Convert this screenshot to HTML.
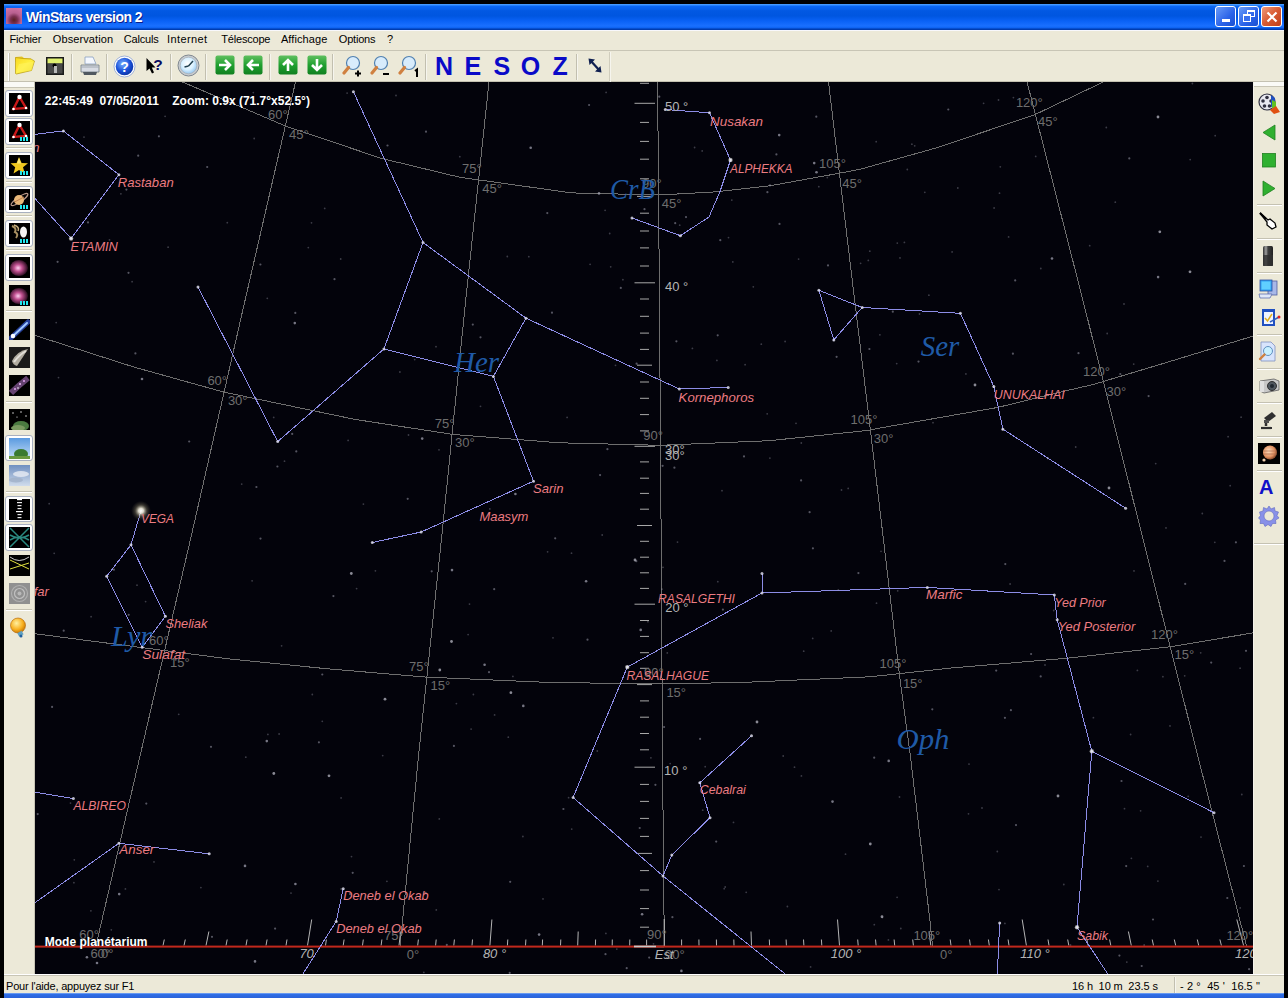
<!DOCTYPE html>
<html><head><meta charset="utf-8">
<style>
*{margin:0;padding:0;box-sizing:border-box}
html,body{width:1288px;height:998px;overflow:hidden;background:#000;font-family:"Liberation Sans",sans-serif;position:relative}
.abs{position:absolute}
#title{left:4px;top:4px;width:1280px;height:26px;background:linear-gradient(#4a9cff 0,#3d95ff 1px,#0c68f4 2px,#0258e2 7px,#0056e0 12px,#0a62f6 17px,#1a70ff 22px,#0c62f0 24px,#003cb0 25px,#003cb0 26px)}
#title .t{left:22px;top:5px;color:#fff;font-weight:bold;font-size:14px;line-height:16px;letter-spacing:-0.55px;text-shadow:1px 1px 0 #0a1e8c;white-space:nowrap}
#menu{left:4px;top:30px;width:1280px;height:21px;background:#ece9d8;border-top:1px solid #f8f8fc}
#menu span{position:absolute;top:2px;font-size:11px;line-height:13px;letter-spacing:-0.2px;color:#000;white-space:nowrap}
#tb{left:4px;top:50px;width:1280px;height:32px;background:#ece9d8;border-top:1px solid #c8c5b5;border-bottom:1px solid #c4c1b1}
#sky{left:35px;top:82px;width:1218px;height:892px;background:#03030b;overflow:hidden}
#ltb{left:4px;top:82px;width:31px;height:892px;background:#ece9d8;border-right:1px solid #c8c5b5}
#rtb{left:1253px;top:82px;width:31px;height:892px;background:#ece9d8;border-left:1px solid #f4f2ea}
#status{left:4px;top:974px;width:1280px;height:19px;background:#ece9d8;border-top:1px solid #fff}
#status span{position:absolute;top:5px;font-size:11px;line-height:13px;color:#000;white-space:nowrap;letter-spacing:-0.2px}
#bot{left:4px;top:993px;width:1280px;height:5px;background:linear-gradient(#9cc0f8 0,#2f6fe8 1px,#2a62d8 5px)}
.btn{top:2px;width:21px;height:21px;border:1px solid #fff;border-radius:3px;background:linear-gradient(135deg,#6a9cf8,#2a62e8 60%,#1a50d0)}
.sep{position:absolute;width:2px;border-left:1px solid #c2bfaf;border-right:1px solid #f6f5ee}
.hsep{position:absolute;height:2px;border-top:1px solid #c5c2b2;border-bottom:1px solid #fff}
.nesoz{position:absolute;top:1px;font-size:25px;line-height:28px;font-weight:bold;color:#0a0ac8}
.fr{position:absolute;left:1px;width:28px;border:1px solid #a8b0c0;border-radius:3px;background:#fff}
.ic{position:absolute}
</style></head>
<body>
<div id="title" class="abs">
  <div class="abs" style="left:2px;top:4px;width:16px;height:16px;background:radial-gradient(circle at 50% 75%,#5a2020 0,#7a3050 25%,#b86090 50%,#d878a8 100%)"></div>
  <div class="abs t">WinStars version 2</div>
  <div class="abs btn" style="left:1211px"><div class="abs" style="left:6px;top:12px;width:8px;height:3px;background:#fff"></div></div>
  <div class="abs btn" style="left:1234px"><div class="abs" style="left:8px;top:3px;width:8px;height:7px;border:1px solid #fff;border-top-width:2px"></div><div class="abs" style="left:4px;top:7px;width:8px;height:8px;border:1px solid #fff;border-top-width:2px;background:#3a70ee"></div></div>
  <div class="abs btn" style="left:1257px;background:linear-gradient(135deg,#f09a7a,#d85a32 50%,#c0401a)"><svg class="abs" style="left:4px;top:4px" width="12" height="12"><path d="M1.5 1.5L10.5 10.5M10.5 1.5L1.5 10.5" stroke="#fff" stroke-width="2.2"/></svg></div>
</div>
<div id="menu" class="abs">
  <span style="left:5.6px">Fichier</span>
  <span style="left:48.8px;letter-spacing:0.1px">Observation</span>
  <span style="left:119.8px">Calculs</span>
  <span style="left:163px;letter-spacing:0.4px">Internet</span>
  <span style="left:217.3px">Télescope</span>
  <span style="left:276.9px;letter-spacing:0.1px">Affichage</span>
  <span style="left:334.8px">Options</span>
  <span style="left:383px">?</span>
</div>
<div id="tb" class="abs"><div class="sep" style="left:4px;top:2px;height:28px;border-left-color:#fff;border-right-color:#c5c2b2"></div>
<svg class="ic" style="left:11px;top:5px" width="21" height="19" viewBox="0 0 21 19">
 <defs><linearGradient id="fold" x1="0" y1="0" x2="1" y2="1"><stop offset="0" stop-color="#f8d820"/><stop offset="0.5" stop-color="#fff040"/><stop offset="1" stop-color="#e8d010"/></linearGradient></defs>
 <path d="M0.5 1 L7 0.5 L9 2 L16 2.5 L16 6 L0.5 6 Z" fill="#e8c828"/>
 <path d="M0.5 1.5 L0.5 17.5 L1.5 18 L16.5 14.5 L19.5 5 L16 3 L8 2.5 Z" fill="url(#fold)" stroke="#b89810" stroke-width="0.7"/>
 <path d="M1 17 L4 8 L19 5.5 L16.5 14.5 Z" fill="#fff460" opacity="0.6"/>
</svg>
<svg class="ic" style="left:42px;top:6px" width="18" height="18" viewBox="0 0 18 18">
 <rect x="0" y="0" width="18" height="18" fill="#1a1a1a"/>
 <rect x="1.5" y="1.5" width="15" height="5" fill="#e0f070"/>
 <rect x="1.5" y="6.5" width="15" height="10" fill="#484848"/>
 <circle cx="8.5" cy="8.5" r="2" fill="#000"/>
 <rect x="8" y="9" width="3" height="7" fill="#b8b8b8"/>
</svg>
<div class="sep" style="left:67px;top:3px;height:26px"></div>
<svg class="ic" style="left:75px;top:4px" width="22" height="22" viewBox="0 0 22 22">
 <path d="M6 2 L14 2 L17 9 L6 9 Z" fill="#f4f8ff" stroke="#8aa0c0" stroke-width="0.8"/>
 <path d="M2 10 L20 10 L20 17 L2 17 Z" fill="#d8dce4" stroke="#707880" stroke-width="0.8"/>
 <path d="M2 12 L20 12" stroke="#a0a8b0" stroke-width="1"/>
 <path d="M4 17 L18 17 L17 20 L5 20 Z" fill="#505860"/>
</svg>
<div class="sep" style="left:102px;top:3px;height:26px"></div>
<svg class="ic" style="left:109px;top:4px" width="23" height="23" viewBox="0 0 23 23">
 <defs><radialGradient id="hq" cx="0.4" cy="0.35" r="0.7"><stop offset="0" stop-color="#7ab0ff"/><stop offset="0.6" stop-color="#1a50d8"/><stop offset="1" stop-color="#0a30a0"/></radialGradient></defs>
 <circle cx="11.5" cy="11.5" r="10.5" fill="#fff" stroke="#8aa0d0" stroke-width="0.8"/>
 <circle cx="11.5" cy="11.5" r="8.8" fill="url(#hq)"/>
 <text x="11.5" y="17" font-size="14" font-weight="bold" fill="#fff" text-anchor="middle" font-family="Liberation Sans">?</text>
</svg>
<svg class="ic" style="left:142px;top:6px" width="20" height="18" viewBox="0 0 20 18">
 <path d="M0.5 1 L0.5 14 L3.5 11.5 L6 16.5 L8 15.5 L5.8 10.5 L9.5 10.5 Z" fill="#000"/>
 <text x="12" y="13" font-size="15.5" font-weight="bold" fill="#0a0a60" text-anchor="middle" font-family="Liberation Sans">?</text>
</svg>
<div class="sep" style="left:166px;top:3px;height:26px"></div>
<svg class="ic" style="left:173px;top:3px" width="23" height="23" viewBox="0 0 23 23">
 <defs><radialGradient id="clk" cx="0.45" cy="0.4" r="0.6"><stop offset="0" stop-color="#ffffff"/><stop offset="0.6" stop-color="#d8f0ff"/><stop offset="1" stop-color="#98c8f0"/></radialGradient></defs>
 <circle cx="11.5" cy="11.5" r="10.5" fill="#c8ccd0" stroke="#808890" stroke-width="1"/>
 <circle cx="11.5" cy="11.5" r="8.3" fill="url(#clk)" stroke="#a0a8b0" stroke-width="0.6"/>
 <path d="M11.5 12 L16 7 M11.5 12 L7.5 13" stroke="#204050" stroke-width="1.5"/>
</svg>
<div class="sep" style="left:201px;top:3px;height:26px"></div>
<svg class="ic" style="left:211px;top:4px" width="20" height="20" viewBox="0 0 20 20">
 <defs><linearGradient id="grn" x1="0" y1="0" x2="0" y2="1"><stop offset="0" stop-color="#60c060"/><stop offset="0.5" stop-color="#20a030"/><stop offset="1" stop-color="#108020"/></linearGradient></defs>
 <rect x="0.5" y="0.5" width="19" height="19" rx="2" fill="url(#grn)"/>
 <path d="M4 10 L15 10 M10 5 L15 10 L10 15" stroke="#fff" stroke-width="2.6" fill="none"/>
</svg>
<svg class="ic" style="left:239px;top:4px" width="20" height="20" viewBox="0 0 20 20">
 <rect x="0.5" y="0.5" width="19" height="19" rx="2" fill="url(#grn)"/>
 <path d="M16 10 L5 10 M10 5 L5 10 L10 15" stroke="#fff" stroke-width="2.6" fill="none"/>
</svg>
<div class="sep" style="left:265px;top:3px;height:26px"></div>
<svg class="ic" style="left:274px;top:4px" width="20" height="20" viewBox="0 0 20 20">
 <rect x="0.5" y="0.5" width="19" height="19" rx="2" fill="url(#grn)"/>
 <path d="M10 16 L10 5 M5 10 L10 5 L15 10" stroke="#fff" stroke-width="2.6" fill="none"/>
</svg>
<svg class="ic" style="left:303px;top:4px" width="20" height="20" viewBox="0 0 20 20">
 <rect x="0.5" y="0.5" width="19" height="19" rx="2" fill="url(#grn)"/>
 <path d="M10 4 L10 15 M5 10 L10 15 L15 10" stroke="#fff" stroke-width="2.6" fill="none"/>
</svg>
<div class="sep" style="left:328px;top:3px;height:26px"></div>
<svg class="ic" style="left:338px;top:4px" width="20" height="22" viewBox="0 0 20 22">
 <circle cx="11" cy="8" r="6.5" fill="#d8ecfc" stroke="#5080b0" stroke-width="1.2"/>
 <path d="M6.5 12.5 L2 18" stroke="#d08040" stroke-width="3.2" stroke-linecap="round"/>
 <path d="M13 18.5 L19 18.5 M16 15.5 L16 21.5" stroke="#000" stroke-width="2"/>
</svg>
<svg class="ic" style="left:366px;top:4px" width="20" height="22" viewBox="0 0 20 22">
 <circle cx="11" cy="8" r="6.5" fill="#d8ecfc" stroke="#5080b0" stroke-width="1.2"/>
 <path d="M6.5 12.5 L2 18" stroke="#d08040" stroke-width="3.2" stroke-linecap="round"/>
 <path d="M13 19 L19 19" stroke="#000" stroke-width="2"/>
</svg>
<svg class="ic" style="left:394px;top:4px" width="22" height="22" viewBox="0 0 22 22">
 <circle cx="11" cy="8" r="6.5" fill="#d8ecfc" stroke="#5080b0" stroke-width="1.2"/>
 <path d="M6.5 12.5 L2 18" stroke="#d08040" stroke-width="3.2" stroke-linecap="round"/>
 <path d="M17 16 L19 14.5 L19 22" stroke="#000" stroke-width="2" fill="none"/>
</svg>
<div class="sep" style="left:421px;top:3px;height:26px"></div>
<div class="nesoz" style="left:431px">N</div>
<div class="nesoz" style="left:460.5px">E</div>
<div class="nesoz" style="left:489.5px">S</div>
<div class="nesoz" style="left:516.8px">O</div>
<div class="nesoz" style="left:548.5px">Z</div>
<div class="sep" style="left:572px;top:3px;height:26px"></div>
<svg class="ic" style="left:583px;top:6px" width="16" height="18" viewBox="0 0 16 18">
 <path d="M3 3 L13 14" stroke="#102050" stroke-width="2.2"/>
 <path d="M1.5 1.5 L8 2.5 L2.5 8 Z M14.5 15.5 L8 14.5 L13.5 9 Z" fill="#102050"/>
</svg>
<div class="sep" style="left:605px;top:1px;height:30px;border-left-color:#d0cdbd"></div>
</div>
<div id="ltb" class="abs"><div class="abs" style="left:0;top:0;width:30px;height:6px;background:#fafaf6;border-bottom:1px solid #c8c5b5"></div>
<div class="fr" style="top:8px;height:27px"></div>
<svg class="ic" style="left:5px;top:11px" width="21" height="21" viewBox="0 0 21 21"><rect width="21" height="21" fill="#000"/><path d="M10.5 4 L17 15 L4.5 16 Z" fill="none" stroke="#c81818" stroke-width="2.4"/><circle cx="10.5" cy="4" r="2.2" fill="#fff"/><circle cx="17" cy="15" r="1.3" fill="#fff"/><circle cx="4.5" cy="16" r="1.3" fill="#fff"/></svg>
<div class="fr" style="top:36px;height:27px"></div>
<svg class="ic" style="left:5px;top:39px" width="21" height="21" viewBox="0 0 21 21"><rect width="21" height="21" fill="#000"/><path d="M10.5 4 L17 15 L4.5 16 Z" fill="none" stroke="#c81818" stroke-width="2.4"/><circle cx="10.5" cy="4" r="2.2" fill="#fff"/><circle cx="17" cy="15" r="1.3" fill="#fff"/><circle cx="4.5" cy="16" r="1.3" fill="#fff"/><rect x="11" y="16" width="2" height="4" fill="#20e8f0"/><rect x="14" y="16" width="2" height="4" fill="#20e8f0"/><rect x="17" y="16" width="2" height="4" fill="#20e8f0"/></svg>
<div class="hsep" style="left:2px;width:26px;top:65px"></div>
<div class="fr" style="top:70px;height:27px"></div>
<svg class="ic" style="left:5px;top:73px" width="21" height="21" viewBox="0 0 21 21"><rect width="21" height="21" fill="#000"/><path d="M10 2 L12.6 8 L19 8.3 L14 12.3 L15.8 18.5 L10 15 L4.5 18.5 L6.2 12.3 L1.5 8.3 L7.6 8 Z" fill="#f0c820"/><path d="M10 3 L12 8.5 L8 8.5 Z" fill="#f8e880"/><rect x="11" y="16" width="2" height="4" fill="#20e8f0"/><rect x="14" y="16" width="2" height="4" fill="#20e8f0"/><rect x="17" y="16" width="2" height="4" fill="#20e8f0"/></svg>
<div class="hsep" style="left:2px;width:26px;top:99px"></div>
<div class="fr" style="top:104px;height:27px"></div>
<svg class="ic" style="left:5px;top:107px" width="21" height="21" viewBox="0 0 21 21"><rect width="21" height="21" fill="#000"/><ellipse cx="10.5" cy="10.5" rx="10" ry="2.6" transform="rotate(-35 10.5 10.5)" fill="none" stroke="#b89888" stroke-width="1.2"/><circle cx="10" cy="11" r="5" fill="#e8b878"/><path d="M5.5 13 L15 8" stroke="#c08050" stroke-width="1"/><rect x="11" y="16" width="2" height="4" fill="#20e8f0"/><rect x="14" y="16" width="2" height="4" fill="#20e8f0"/><rect x="17" y="16" width="2" height="4" fill="#20e8f0"/></svg>
<div class="hsep" style="left:2px;width:26px;top:133px"></div>
<div class="fr" style="top:138px;height:27px"></div>
<svg class="ic" style="left:5px;top:141px" width="21" height="21" viewBox="0 0 21 21"><rect width="21" height="21" fill="#000"/><path d="M3 3 Q8 5 6 9 Q10 11 7 15" stroke="#a89060" stroke-width="2" fill="none"/><path d="M5 2 Q11 4 9 8" stroke="#c8b080" stroke-width="1.5" fill="none"/><ellipse cx="14.5" cy="9" rx="3.5" ry="5.5" fill="#f4f4f4"/><rect x="11" y="16" width="2" height="4" fill="#20e8f0"/><rect x="14" y="16" width="2" height="4" fill="#20e8f0"/><rect x="17" y="16" width="2" height="4" fill="#20e8f0"/></svg>
<div class="hsep" style="left:2px;width:26px;top:167px"></div>
<div class="fr" style="top:172px;height:27px"></div>
<svg class="ic" style="left:5px;top:175px" width="21" height="21" viewBox="0 0 21 21"><rect width="21" height="21" fill="#000"/><defs><radialGradient id="neb" cx="0.45" cy="0.5" r="0.55"><stop offset="0" stop-color="#ffd0f0"/><stop offset="0.4" stop-color="#c05090"/><stop offset="1" stop-color="#200818"/></radialGradient></defs><ellipse cx="10" cy="11" rx="9" ry="8" fill="url(#neb)"/></svg>
<svg class="ic" style="left:5px;top:203px" width="21" height="21" viewBox="0 0 21 21"><rect width="21" height="21" fill="#000"/><ellipse cx="10" cy="11" rx="9" ry="8" fill="url(#neb)"/><rect x="11" y="16" width="2" height="4" fill="#20e8f0"/><rect x="14" y="16" width="2" height="4" fill="#20e8f0"/><rect x="17" y="16" width="2" height="4" fill="#20e8f0"/></svg>
<div class="hsep" style="left:2px;width:26px;top:228px"></div>
<svg class="ic" style="left:5px;top:237px" width="21" height="21" viewBox="0 0 21 21"><rect width="21" height="21" fill="#000"/><path d="M2 19 L19 3" stroke="#3050c0" stroke-width="5" stroke-linecap="round" opacity="0.8"/><path d="M3 18 L18 4" stroke="#a0c8ff" stroke-width="2" stroke-linecap="round"/><circle cx="4" cy="17" r="2.2" fill="#fff"/></svg>
<svg class="ic" style="left:5px;top:264.6px" width="21" height="21" viewBox="0 0 21 21"><rect width="21" height="21" fill="#1a1a1a"/><path d="M3 14 Q8 4 19 2 Q14 10 8 19 Q4 18 3 14 Z" fill="#b0aca0"/><path d="M5 15 Q10 8 17 4" stroke="#e0ded8" stroke-width="2" fill="none"/></svg>
<svg class="ic" style="left:5px;top:292.5px" width="21" height="21" viewBox="0 0 21 21"><rect width="21" height="21" fill="#000"/><path d="M2 18 Q10 10 19 3" stroke="#9060a0" stroke-width="6" opacity="0.7"/><circle cx="6" cy="14" r="1" fill="#e0a0f0"/><circle cx="11" cy="9" r="1" fill="#f0c0ff"/><circle cx="15" cy="6" r="1" fill="#e0a0f0"/><circle cx="9" cy="13" r="0.8" fill="#fff"/></svg>
<div class="hsep" style="left:2px;width:26px;top:319px"></div>
<svg class="ic" style="left:5px;top:327px" width="21" height="21" viewBox="0 0 21 21"><rect width="21" height="21" fill="#000"/><circle cx="4" cy="4" r="0.7" fill="#fff"/><circle cx="12" cy="3" r="0.7" fill="#fff"/><circle cx="17" cy="7" r="0.7" fill="#fff"/><circle cx="8" cy="8" r="0.6" fill="#fff"/><ellipse cx="12" cy="17" rx="8" ry="5" fill="#4a7a40"/><ellipse cx="9" cy="19" rx="7" ry="3" fill="#7a9a60"/></svg>
<div class="fr" style="top:353px;height:26px"></div>
<svg class="ic" style="left:5px;top:355.5px" width="21" height="21" viewBox="0 0 21 21"><defs><linearGradient id="dsky" x1="0" y1="0" x2="0" y2="1"><stop offset="0" stop-color="#5a9ae0"/><stop offset="1" stop-color="#c8e0f8"/></linearGradient></defs><rect width="21" height="21" fill="url(#dsky)"/><ellipse cx="12" cy="16" rx="7" ry="5" fill="#3a7a30"/><rect x="0" y="18" width="21" height="3" fill="#6a9a40"/></svg>
<svg class="ic" style="left:5px;top:383px" width="21" height="21" viewBox="0 0 21 21"><defs><linearGradient id="cl" x1="0" y1="0" x2="0" y2="1"><stop offset="0" stop-color="#7090c0"/><stop offset="1" stop-color="#d0dcec"/></linearGradient></defs><rect width="21" height="21" fill="url(#cl)"/><ellipse cx="12" cy="9" rx="8" ry="3" fill="#e8ecf4" opacity="0.8"/><ellipse cx="7" cy="15" rx="7" ry="2.5" fill="#a0b0c8" opacity="0.8"/></svg>
<div class="hsep" style="left:2px;width:26px;top:409px"></div>
<div class="fr" style="top:414px;height:26px"></div>
<svg class="ic" style="left:5px;top:417px" width="21" height="21" viewBox="0 0 21 21"><rect width="21" height="21" fill="#000"/><rect x="8" y="0" width="5" height="1.2" fill="#fff"/><rect x="8" y="3" width="5" height="1.2" fill="#e8e8e8"/><rect x="8.5" y="6" width="4" height="1.2" fill="#e8e8e8"/><rect x="8.5" y="9" width="4" height="1.2" fill="#e8e8e8"/><rect x="7" y="12" width="7" height="1.2" fill="#fff"/><rect x="8.5" y="15" width="4" height="1.2" fill="#e8e8e8"/><rect x="8.5" y="18" width="4" height="1.2" fill="#e8e8e8"/></svg>
<div class="fr" style="top:442px;height:27px"></div>
<svg class="ic" style="left:5px;top:445px" width="21" height="21" viewBox="0 0 21 21"><rect width="21" height="21" fill="#000"/><path d="M1 1 L20 20 M20 1 L1 20 M1 8 Q10.5 14 20 8 M1 13 Q10.5 7 20 13" stroke="#2a8a80" stroke-width="1.5" fill="none"/></svg>
<svg class="ic" style="left:5px;top:473px" width="21" height="21" viewBox="0 0 21 21"><rect width="21" height="21" fill="#000"/><path d="M1 5 L20 14 M1 14 L20 8" stroke="#e0e040" stroke-width="1" fill="none"/><path d="M1 2 Q10 9 20 2" stroke="#fff" stroke-width="0.8" fill="none"/></svg>
<svg class="ic" style="left:5px;top:500.5px" width="21" height="21" viewBox="0 0 21 21"><rect width="21" height="21" fill="#909090"/><circle cx="10.5" cy="10.5" r="8" fill="none" stroke="#b0b0b0" stroke-width="1.2"/><circle cx="10.5" cy="10.5" r="5" fill="none" stroke="#c0c0c0" stroke-width="1.2"/><circle cx="10.5" cy="10.5" r="2" fill="#b8b8b8"/></svg>
<div class="hsep" style="left:2px;width:26px;top:527px"></div>
<svg class="ic" style="left:5px;top:535px" width="21" height="21" viewBox="0 0 21 21"><defs><radialGradient id="bulb" cx="0.4" cy="0.35" r="0.7"><stop offset="0" stop-color="#fff0a0"/><stop offset="0.6" stop-color="#f8b020"/><stop offset="1" stop-color="#c07000"/></radialGradient></defs><circle cx="9" cy="8.5" r="7.5" fill="url(#bulb)" stroke="#b06000" stroke-width="0.6"/><rect x="9" y="15" width="5" height="4" fill="#60a0c0" transform="rotate(-30 11 17)"/><circle cx="12" cy="19" r="1.5" fill="#2060a0"/></svg></div>
<div id="sky" class="abs"></div>
<svg class="abs" style="left:35px;top:82px" width="1218" height="892" viewBox="35 82 1218 892" font-family="Liberation Sans" xml:space="preserve"><defs><radialGradient id="vg"><stop offset="0" stop-color="#ffffff" stop-opacity="1"/><stop offset="0.25" stop-color="#f4f0e0" stop-opacity="0.9"/><stop offset="0.6" stop-color="#a09878" stop-opacity="0.35"/><stop offset="1" stop-color="#605840" stop-opacity="0"/></radialGradient></defs><polyline points="170,77 184.8,83 285.4,126 381,158.3 460,177.3 571.8,192.9 658.8,195 714.7,191.9 770.6,185.7 838.9,173.3 860,169.3 937,147.7 1034.8,114.7 1102.2,82.5 1114,76" fill="none" stroke="#6e6e6e" stroke-width="1" shape-rendering="crispEdges"/>
<polyline points="30,333.8 35,335.4 134.4,367.2 223.8,392.1 283.4,404.5 355,419.4 452.7,434.4 559.6,442.8 660.3,445.3 769.3,440.7 870,430.2 880,428 997.4,407.5 1066.3,390.7 1093,384.6 1167.5,362.2 1253,336.1 1260,334" fill="none" stroke="#6e6e6e" stroke-width="1" shape-rendering="crispEdges"/>
<polyline points="30,633 35,633.7 142.6,647.7 230.6,659.1 328.4,668.9 426.3,677.1 547.8,682.4 658.7,684 743.4,682.4 870,676.8 951.5,668 1067.5,658.2 1171.3,646.6 1253,632.9 1260,631.5" fill="none" stroke="#6e6e6e" stroke-width="1" shape-rendering="crispEdges"/>
<polyline points="297,76 295.3,83 270.5,190 243.5,307 192.2,532 139.8,757 98.4,935.3 96,946" fill="none" stroke="#6e6e6e" stroke-width="1" shape-rendering="crispEdges"/>
<polyline points="489.5,76 489,82 465,307 442.2,532 418.4,757 400.2,944.7 400,946" fill="none" stroke="#6e6e6e" stroke-width="1" shape-rendering="crispEdges"/>
<polyline points="657.5,76 657.6,82 659.5,307 661.1,532 662.5,757 664.3,946" fill="none" stroke="#6e6e6e" stroke-width="1" shape-rendering="crispEdges"/>
<polyline points="827.5,76 828.5,82 839.5,174.1 854.8,301.3 870.2,428.5 881.1,519.7 899.5,675.3 910.5,756.9 930.4,924.5 932.6,946.5" fill="none" stroke="#6e6e6e" stroke-width="1" shape-rendering="crispEdges"/>
<polyline points="1025.5,76 1027.2,82.5 1052.2,180 1084.6,307 1141.2,532 1198,757 1246,944 1246.5,946" fill="none" stroke="#6e6e6e" stroke-width="1" shape-rendering="crispEdges"/>
<line x1="640" y1="83.3" x2="649" y2="83.3" stroke="#a8a8a8" stroke-width="1"/>
<line x1="634.5" y1="103.3" x2="655" y2="103.3" stroke="#a8a8a8" stroke-width="1"/>
<line x1="634.5" y1="282.8" x2="655" y2="282.8" stroke="#a8a8a8" stroke-width="1"/>
<line x1="634.5" y1="446.3" x2="655" y2="446.3" stroke="#a8a8a8" stroke-width="1"/>
<line x1="634.5" y1="604.2" x2="655" y2="604.2" stroke="#a8a8a8" stroke-width="1"/>
<line x1="634.5" y1="767.2" x2="655" y2="767.2" stroke="#a8a8a8" stroke-width="1"/>
<line x1="640" y1="299" x2="649" y2="299" stroke="#a8a8a8" stroke-width="1"/>
<line x1="640" y1="316.3" x2="649" y2="316.3" stroke="#a8a8a8" stroke-width="1"/>
<line x1="640" y1="333.1" x2="649" y2="333.1" stroke="#a8a8a8" stroke-width="1"/>
<line x1="640" y1="349.4" x2="649" y2="349.4" stroke="#a8a8a8" stroke-width="1"/>
<line x1="637" y1="365.2" x2="652" y2="365.2" stroke="#a8a8a8" stroke-width="1"/>
<line x1="640" y1="382" x2="649" y2="382" stroke="#a8a8a8" stroke-width="1"/>
<line x1="640" y1="398.3" x2="649" y2="398.3" stroke="#a8a8a8" stroke-width="1"/>
<line x1="640" y1="414.6" x2="649" y2="414.6" stroke="#a8a8a8" stroke-width="1"/>
<line x1="640" y1="430.9" x2="649" y2="430.9" stroke="#a8a8a8" stroke-width="1"/>
<line x1="640" y1="461.9" x2="649" y2="461.9" stroke="#a8a8a8" stroke-width="1"/>
<line x1="640" y1="478.2" x2="649" y2="478.2" stroke="#a8a8a8" stroke-width="1"/>
<line x1="640" y1="493.4" x2="649" y2="493.4" stroke="#a8a8a8" stroke-width="1"/>
<line x1="640" y1="509.2" x2="649" y2="509.2" stroke="#a8a8a8" stroke-width="1"/>
<line x1="637" y1="525.5" x2="652" y2="525.5" stroke="#a8a8a8" stroke-width="1"/>
<line x1="640" y1="541.3" x2="649" y2="541.3" stroke="#a8a8a8" stroke-width="1"/>
<line x1="640" y1="557.2" x2="649" y2="557.2" stroke="#a8a8a8" stroke-width="1"/>
<line x1="640" y1="572.8" x2="649" y2="572.8" stroke="#a8a8a8" stroke-width="1"/>
<line x1="640" y1="588.4" x2="649" y2="588.4" stroke="#a8a8a8" stroke-width="1"/>
<line x1="640" y1="620.5" x2="649" y2="620.5" stroke="#a8a8a8" stroke-width="1"/>
<line x1="640" y1="636.4" x2="649" y2="636.4" stroke="#a8a8a8" stroke-width="1"/>
<line x1="640" y1="652.7" x2="649" y2="652.7" stroke="#a8a8a8" stroke-width="1"/>
<line x1="640" y1="668.3" x2="649" y2="668.3" stroke="#a8a8a8" stroke-width="1"/>
<line x1="637" y1="684.6" x2="652" y2="684.6" stroke="#a8a8a8" stroke-width="1"/>
<line x1="640" y1="700.9" x2="649" y2="700.9" stroke="#a8a8a8" stroke-width="1"/>
<line x1="640" y1="717.2" x2="649" y2="717.2" stroke="#a8a8a8" stroke-width="1"/>
<line x1="640" y1="733.5" x2="649" y2="733.5" stroke="#a8a8a8" stroke-width="1"/>
<line x1="640" y1="749.8" x2="649" y2="749.8" stroke="#a8a8a8" stroke-width="1"/>
<line x1="640" y1="784.4" x2="649" y2="784.4" stroke="#a8a8a8" stroke-width="1"/>
<line x1="640" y1="801.4" x2="649" y2="801.4" stroke="#a8a8a8" stroke-width="1"/>
<line x1="640" y1="818.4" x2="649" y2="818.4" stroke="#a8a8a8" stroke-width="1"/>
<line x1="640" y1="836.4" x2="649" y2="836.4" stroke="#a8a8a8" stroke-width="1"/>
<line x1="637" y1="853.4" x2="652" y2="853.4" stroke="#a8a8a8" stroke-width="1"/>
<line x1="640" y1="870.6" x2="649" y2="870.6" stroke="#a8a8a8" stroke-width="1"/>
<line x1="640" y1="890" x2="649" y2="890" stroke="#a8a8a8" stroke-width="1"/>
<line x1="640" y1="908.6" x2="649" y2="908.6" stroke="#a8a8a8" stroke-width="1"/>
<line x1="640" y1="927.2" x2="649" y2="927.2" stroke="#a8a8a8" stroke-width="1"/>
<line x1="640" y1="122.4" x2="649" y2="122.4" stroke="#a8a8a8" stroke-width="1"/>
<line x1="640" y1="141.4" x2="649" y2="141.4" stroke="#a8a8a8" stroke-width="1"/>
<line x1="640" y1="159.2" x2="649" y2="159.2" stroke="#a8a8a8" stroke-width="1"/>
<line x1="640" y1="178.8" x2="649" y2="178.8" stroke="#a8a8a8" stroke-width="1"/>
<line x1="637" y1="196.4" x2="652" y2="196.4" stroke="#a8a8a8" stroke-width="1"/>
<line x1="640" y1="213.2" x2="649" y2="213.2" stroke="#a8a8a8" stroke-width="1"/>
<line x1="640" y1="231" x2="649" y2="231" stroke="#a8a8a8" stroke-width="1"/>
<line x1="640" y1="247.9" x2="649" y2="247.9" stroke="#a8a8a8" stroke-width="1"/>
<line x1="640" y1="266" x2="649" y2="266" stroke="#a8a8a8" stroke-width="1"/>
<line x1="163" y1="945.5" x2="164.3" y2="939.5" stroke="#b4b4b4" stroke-width="1"/>
<line x1="184" y1="945.5" x2="185.3" y2="939.5" stroke="#b4b4b4" stroke-width="1"/>
<line x1="206" y1="945.5" x2="208.9" y2="931.5" stroke="#b4b4b4" stroke-width="1"/>
<line x1="226" y1="945.5" x2="227.2" y2="939.5" stroke="#b4b4b4" stroke-width="1"/>
<line x1="246" y1="945.5" x2="247.1" y2="939.5" stroke="#b4b4b4" stroke-width="1"/>
<line x1="266" y1="945.5" x2="267.1" y2="939.5" stroke="#b4b4b4" stroke-width="1"/>
<line x1="286" y1="945.5" x2="287" y2="939.5" stroke="#b4b4b4" stroke-width="1"/>
<line x1="307.5" y1="945.5" x2="311.7" y2="919.5" stroke="#b4b4b4" stroke-width="1"/>
<line x1="325.5" y1="945.5" x2="326.4" y2="939.5" stroke="#b4b4b4" stroke-width="1"/>
<line x1="343.2" y1="945.5" x2="344.1" y2="939.5" stroke="#b4b4b4" stroke-width="1"/>
<line x1="362.5" y1="945.5" x2="363.3" y2="939.5" stroke="#b4b4b4" stroke-width="1"/>
<line x1="381.1" y1="945.5" x2="381.9" y2="939.5" stroke="#b4b4b4" stroke-width="1"/>
<line x1="399" y1="945.5" x2="400.7" y2="931.5" stroke="#b4b4b4" stroke-width="1"/>
<line x1="417.7" y1="945.5" x2="418.4" y2="939.5" stroke="#b4b4b4" stroke-width="1"/>
<line x1="435.6" y1="945.5" x2="436.2" y2="939.5" stroke="#b4b4b4" stroke-width="1"/>
<line x1="453.8" y1="945.5" x2="454.4" y2="939.5" stroke="#b4b4b4" stroke-width="1"/>
<line x1="472" y1="945.5" x2="472.5" y2="939.5" stroke="#b4b4b4" stroke-width="1"/>
<line x1="489.9" y1="945.5" x2="491.9" y2="919.5" stroke="#b4b4b4" stroke-width="1"/>
<line x1="507.4" y1="945.5" x2="507.8" y2="939.5" stroke="#b4b4b4" stroke-width="1"/>
<line x1="525.5" y1="945.5" x2="525.9" y2="939.5" stroke="#b4b4b4" stroke-width="1"/>
<line x1="542.3" y1="945.5" x2="542.6" y2="939.5" stroke="#b4b4b4" stroke-width="1"/>
<line x1="560.5" y1="945.5" x2="560.8" y2="939.5" stroke="#b4b4b4" stroke-width="1"/>
<line x1="577.7" y1="945.5" x2="578.2" y2="931.5" stroke="#b4b4b4" stroke-width="1"/>
<line x1="595.4" y1="945.5" x2="595.6" y2="939.5" stroke="#b4b4b4" stroke-width="1"/>
<line x1="612.2" y1="945.5" x2="612.3" y2="939.5" stroke="#b4b4b4" stroke-width="1"/>
<line x1="629.7" y1="945.5" x2="629.8" y2="939.5" stroke="#b4b4b4" stroke-width="1"/>
<line x1="646.6" y1="945.5" x2="646.6" y2="939.5" stroke="#b4b4b4" stroke-width="1"/>
<line x1="681.6" y1="945.5" x2="681.6" y2="939.5" stroke="#b4b4b4" stroke-width="1"/>
<line x1="699" y1="945.5" x2="698.9" y2="939.5" stroke="#b4b4b4" stroke-width="1"/>
<line x1="716.5" y1="945.5" x2="716.4" y2="939.5" stroke="#b4b4b4" stroke-width="1"/>
<line x1="734" y1="945.5" x2="733.8" y2="939.5" stroke="#b4b4b4" stroke-width="1"/>
<line x1="751.5" y1="945.5" x2="751" y2="931.5" stroke="#b4b4b4" stroke-width="1"/>
<line x1="769.6" y1="945.5" x2="769.3" y2="939.5" stroke="#b4b4b4" stroke-width="1"/>
<line x1="786.4" y1="945.5" x2="786.1" y2="939.5" stroke="#b4b4b4" stroke-width="1"/>
<line x1="803.9" y1="945.5" x2="803.5" y2="939.5" stroke="#b4b4b4" stroke-width="1"/>
<line x1="821.8" y1="945.5" x2="821.4" y2="939.5" stroke="#b4b4b4" stroke-width="1"/>
<line x1="839.5" y1="945.5" x2="837.5" y2="919.5" stroke="#b4b4b4" stroke-width="1"/>
<line x1="858.2" y1="945.5" x2="857.7" y2="939.5" stroke="#b4b4b4" stroke-width="1"/>
<line x1="876.1" y1="945.5" x2="875.5" y2="939.5" stroke="#b4b4b4" stroke-width="1"/>
<line x1="894.7" y1="945.5" x2="894.1" y2="939.5" stroke="#b4b4b4" stroke-width="1"/>
<line x1="913.4" y1="945.5" x2="912.7" y2="939.5" stroke="#b4b4b4" stroke-width="1"/>
<line x1="930.8" y1="945.5" x2="929.1" y2="931.5" stroke="#b4b4b4" stroke-width="1"/>
<line x1="951" y1="945.5" x2="950.2" y2="939.5" stroke="#b4b4b4" stroke-width="1"/>
<line x1="970.3" y1="945.5" x2="969.5" y2="939.5" stroke="#b4b4b4" stroke-width="1"/>
<line x1="989.3" y1="945.5" x2="988.4" y2="939.5" stroke="#b4b4b4" stroke-width="1"/>
<line x1="1009" y1="945.5" x2="1008.1" y2="939.5" stroke="#b4b4b4" stroke-width="1"/>
<line x1="1026.4" y1="945.5" x2="1022.2" y2="919.5" stroke="#b4b4b4" stroke-width="1"/>
<line x1="1049" y1="945.5" x2="1048" y2="939.5" stroke="#b4b4b4" stroke-width="1"/>
<line x1="1068.8" y1="945.5" x2="1067.7" y2="939.5" stroke="#b4b4b4" stroke-width="1"/>
<line x1="1088" y1="945.5" x2="1086.9" y2="939.5" stroke="#b4b4b4" stroke-width="1"/>
<line x1="1110.8" y1="945.5" x2="1109.6" y2="939.5" stroke="#b4b4b4" stroke-width="1"/>
<line x1="1131.3" y1="945.5" x2="1128.4" y2="931.5" stroke="#b4b4b4" stroke-width="1"/>
<line x1="1153.5" y1="945.5" x2="1152.2" y2="939.5" stroke="#b4b4b4" stroke-width="1"/>
<line x1="1175.7" y1="945.5" x2="1174.3" y2="939.5" stroke="#b4b4b4" stroke-width="1"/>
<line x1="1198.7" y1="945.5" x2="1197.3" y2="939.5" stroke="#b4b4b4" stroke-width="1"/>
<line x1="1221.4" y1="945.5" x2="1219.9" y2="939.5" stroke="#b4b4b4" stroke-width="1"/>
<line x1="1243.6" y1="945.5" x2="1236.8" y2="919.5" stroke="#b4b4b4" stroke-width="1"/>
<line x1="634" y1="946.5" x2="664" y2="946.5" stroke="#c0c0c0" stroke-width="1.5"/>
<line x1="664.2" y1="919" x2="664.2" y2="946" stroke="#c0c0c0" stroke-width="1"/>
<rect x="30" y="945.6" width="1230" height="2" fill="#c0281c"/>
<line x1="634" y1="946.5" x2="656" y2="946.5" stroke="#c8c8c8" stroke-width="1.6"/>
<polyline points="28,135.2 63.4,130.9 118.9,174.7 71.1,238.5 28,190.8" fill="none" stroke="#8c8ce6" stroke-width="1" shape-rendering="crispEdges"/>
<polyline points="353.4,91.7 423,242.5 383.9,349 277.7,441.6 198,287" fill="none" stroke="#8c8ce6" stroke-width="1" shape-rendering="crispEdges"/>
<polyline points="383.9,349 493.4,376.4 526,318.2 423,242.5" fill="none" stroke="#8c8ce6" stroke-width="1" shape-rendering="crispEdges"/>
<polyline points="526,318.2 679.3,389 728.2,387.4" fill="none" stroke="#8c8ce6" stroke-width="1" shape-rendering="crispEdges"/>
<polyline points="493.4,376.4 533.5,481.2 421.2,532 372.3,542.5" fill="none" stroke="#8c8ce6" stroke-width="1" shape-rendering="crispEdges"/>
<polyline points="665.3,109.5 709.5,112.8 730.5,160 720,191.5 709,217 680.4,235.7 632,218" fill="none" stroke="#8c8ce6" stroke-width="1" shape-rendering="crispEdges"/>
<polyline points="818.9,290.3 862.2,307.5 833.8,339.9 818.9,290.3" fill="none" stroke="#8c8ce6" stroke-width="1" shape-rendering="crispEdges"/>
<polyline points="862.2,307.5 960.4,313.3 993.8,386.5 1002.9,429.2 1125.6,508.2" fill="none" stroke="#8c8ce6" stroke-width="1" shape-rendering="crispEdges"/>
<polyline points="762,573.5 762,593" fill="none" stroke="#8c8ce6" stroke-width="1" shape-rendering="crispEdges"/>
<polyline points="627.3,667.1 762,593 927.3,587.4 1054.3,595 1057.2,619.7 1091.8,751.3 1214,812.7" fill="none" stroke="#8c8ce6" stroke-width="1" shape-rendering="crispEdges"/>
<polyline points="1091.8,751.3 1077,927.3 1107.8,974 1112,980" fill="none" stroke="#8c8ce6" stroke-width="1" shape-rendering="crispEdges"/>
<polyline points="627.3,667.1 573.1,797.5 663,876 785.2,974 792,980" fill="none" stroke="#8c8ce6" stroke-width="1" shape-rendering="crispEdges"/>
<polyline points="751.5,735.8 699.8,782.8 710,817.7 671.8,855 663,876" fill="none" stroke="#8c8ce6" stroke-width="1" shape-rendering="crispEdges"/>
<polyline points="999.7,923 997,980" fill="none" stroke="#8c8ce6" stroke-width="1" shape-rendering="crispEdges"/>
<polyline points="141,510.8 131,544.8 106.7,576.3 142.2,647.3 165.4,616.3 131,544.8" fill="none" stroke="#8c8ce6" stroke-width="1" shape-rendering="crispEdges"/>
<polyline points="28,790.9 73.4,798.6" fill="none" stroke="#8c8ce6" stroke-width="1" shape-rendering="crispEdges"/>
<polyline points="28,907.6 118.9,843.3 209.2,853.8" fill="none" stroke="#8c8ce6" stroke-width="1" shape-rendering="crispEdges"/>
<polyline points="343.2,888.8 336.2,921.4 302.9,974 300,980" fill="none" stroke="#8c8ce6" stroke-width="1" shape-rendering="crispEdges"/>
<circle cx="586.1" cy="581.2" r="1.3" fill="#a8a8b8" opacity="0.7"/>
<circle cx="602.2" cy="535" r="0.9" fill="#a8a8b8" opacity="0.35"/>
<circle cx="260.5" cy="538.6" r="1.1" fill="#a8a8b8" opacity="0.5"/>
<circle cx="1000.3" cy="166.8" r="0.9" fill="#a8a8b8" opacity="0.35"/>
<circle cx="146.3" cy="803.6" r="1.1" fill="#a8a8b8" opacity="0.5"/>
<circle cx="86.9" cy="957.2" r="1.3" fill="#a8a8b8" opacity="0.7"/>
<circle cx="831.2" cy="630.9" r="0.9" fill="#a8a8b8" opacity="0.35"/>
<circle cx="54.2" cy="553.3" r="0.9" fill="#a8a8b8" opacity="0.35"/>
<circle cx="267.3" cy="298.3" r="0.9" fill="#a8a8b8" opacity="0.35"/>
<circle cx="600.1" cy="475.1" r="1.1" fill="#a8a8b8" opacity="0.5"/>
<circle cx="667.3" cy="652.9" r="0.9" fill="#a8a8b8" opacity="0.35"/>
<circle cx="841.5" cy="490" r="0.9" fill="#a8a8b8" opacity="0.35"/>
<circle cx="1249.1" cy="969.2" r="1.1" fill="#a8a8b8" opacity="0.5"/>
<circle cx="896.7" cy="363.6" r="0.9" fill="#a8a8b8" opacity="0.35"/>
<circle cx="387.5" cy="145.5" r="1.1" fill="#a8a8b8" opacity="0.5"/>
<circle cx="522.9" cy="836.5" r="0.9" fill="#a8a8b8" opacity="0.35"/>
<circle cx="1201" cy="837.1" r="0.9" fill="#a8a8b8" opacity="0.35"/>
<circle cx="291" cy="893.1" r="0.9" fill="#a8a8b8" opacity="0.35"/>
<circle cx="1228.1" cy="436.7" r="0.9" fill="#a8a8b8" opacity="0.35"/>
<circle cx="801.4" cy="775.9" r="0.9" fill="#a8a8b8" opacity="0.35"/>
<circle cx="142" cy="379" r="1.3" fill="#a8a8b8" opacity="0.7"/>
<circle cx="957.8" cy="188" r="0.9" fill="#a8a8b8" opacity="0.35"/>
<circle cx="158.9" cy="136.3" r="1.1" fill="#a8a8b8" opacity="0.5"/>
<circle cx="252.1" cy="580.8" r="0.9" fill="#a8a8b8" opacity="0.35"/>
<circle cx="267.9" cy="734.4" r="0.9" fill="#a8a8b8" opacity="0.35"/>
<circle cx="818.8" cy="186.7" r="0.9" fill="#a8a8b8" opacity="0.35"/>
<circle cx="294.8" cy="323.1" r="1.3" fill="#a8a8b8" opacity="0.7"/>
<circle cx="1012.9" cy="353.7" r="1.1" fill="#a8a8b8" opacity="0.5"/>
<circle cx="292.2" cy="433.9" r="1.1" fill="#a8a8b8" opacity="0.5"/>
<circle cx="816.5" cy="172.3" r="1.3" fill="#a8a8b8" opacity="0.7"/>
<circle cx="295.3" cy="312.9" r="1.1" fill="#a8a8b8" opacity="0.5"/>
<circle cx="436" cy="346.7" r="0.9" fill="#a8a8b8" opacity="0.35"/>
<circle cx="145.6" cy="601.6" r="0.9" fill="#a8a8b8" opacity="0.35"/>
<circle cx="767.2" cy="413.8" r="0.9" fill="#a8a8b8" opacity="0.35"/>
<circle cx="1202.3" cy="513.5" r="0.9" fill="#a8a8b8" opacity="0.35"/>
<circle cx="1089.7" cy="245.7" r="0.9" fill="#a8a8b8" opacity="0.35"/>
<circle cx="1140.6" cy="810.8" r="0.9" fill="#a8a8b8" opacity="0.35"/>
<circle cx="266.8" cy="741.1" r="1.3" fill="#a8a8b8" opacity="0.7"/>
<circle cx="275.1" cy="928.6" r="1.1" fill="#a8a8b8" opacity="0.5"/>
<circle cx="769.9" cy="458.1" r="0.9" fill="#a8a8b8" opacity="0.35"/>
<circle cx="83.1" cy="939.8" r="0.9" fill="#a8a8b8" opacity="0.35"/>
<circle cx="892.8" cy="311.7" r="1.1" fill="#a8a8b8" opacity="0.5"/>
<circle cx="761.3" cy="344.2" r="0.9" fill="#a8a8b8" opacity="0.35"/>
<circle cx="911.9" cy="144.2" r="0.9" fill="#a8a8b8" opacity="0.35"/>
<circle cx="716.2" cy="841.6" r="1.1" fill="#a8a8b8" opacity="0.5"/>
<circle cx="376.7" cy="899.5" r="0.9" fill="#a8a8b8" opacity="0.35"/>
<circle cx="56.2" cy="322.6" r="0.9" fill="#a8a8b8" opacity="0.35"/>
<circle cx="109.5" cy="239.9" r="0.9" fill="#a8a8b8" opacity="0.35"/>
<circle cx="731.8" cy="200.1" r="0.9" fill="#a8a8b8" opacity="0.35"/>
<circle cx="1119.4" cy="955.6" r="1.1" fill="#a8a8b8" opacity="0.5"/>
<circle cx="876.5" cy="603.2" r="0.9" fill="#a8a8b8" opacity="0.35"/>
<circle cx="78.7" cy="98.9" r="1.1" fill="#a8a8b8" opacity="0.5"/>
<circle cx="888.4" cy="939.9" r="0.9" fill="#a8a8b8" opacity="0.35"/>
<circle cx="809.6" cy="512.2" r="1.1" fill="#a8a8b8" opacity="0.5"/>
<circle cx="423.8" cy="972.4" r="0.9" fill="#a8a8b8" opacity="0.35"/>
<circle cx="700.1" cy="738.9" r="1.1" fill="#a8a8b8" opacity="0.5"/>
<circle cx="932.3" cy="709.3" r="1.1" fill="#a8a8b8" opacity="0.5"/>
<circle cx="1148.6" cy="396.1" r="1.1" fill="#a8a8b8" opacity="0.5"/>
<circle cx="1131.4" cy="858.3" r="0.9" fill="#a8a8b8" opacity="0.35"/>
<circle cx="997.3" cy="851.5" r="0.9" fill="#a8a8b8" opacity="0.35"/>
<circle cx="796" cy="423.3" r="0.9" fill="#a8a8b8" opacity="0.35"/>
<circle cx="776.4" cy="154.4" r="1.1" fill="#a8a8b8" opacity="0.5"/>
<circle cx="1243.9" cy="866" r="1.1" fill="#a8a8b8" opacity="0.5"/>
<circle cx="508.3" cy="737.2" r="0.9" fill="#a8a8b8" opacity="0.35"/>
<circle cx="571.7" cy="829.1" r="0.9" fill="#a8a8b8" opacity="0.35"/>
<circle cx="948.3" cy="109.5" r="1.1" fill="#a8a8b8" opacity="0.5"/>
<circle cx="620.8" cy="287.9" r="1.1" fill="#a8a8b8" opacity="0.5"/>
<circle cx="640.7" cy="629.9" r="1.3" fill="#a8a8b8" opacity="0.7"/>
<circle cx="347.1" cy="93.1" r="0.9" fill="#a8a8b8" opacity="0.35"/>
<circle cx="860.6" cy="263.3" r="0.9" fill="#a8a8b8" opacity="0.35"/>
<circle cx="1137.4" cy="670.4" r="0.9" fill="#a8a8b8" opacity="0.35"/>
<circle cx="1120.3" cy="374" r="1.1" fill="#a8a8b8" opacity="0.5"/>
<circle cx="277.4" cy="466.5" r="1.1" fill="#a8a8b8" opacity="0.5"/>
<circle cx="1147.7" cy="866.4" r="0.9" fill="#a8a8b8" opacity="0.35"/>
<circle cx="745.1" cy="364.7" r="0.9" fill="#a8a8b8" opacity="0.35"/>
<circle cx="639.7" cy="828" r="1.1" fill="#a8a8b8" opacity="0.5"/>
<circle cx="900.8" cy="928.5" r="0.9" fill="#a8a8b8" opacity="0.35"/>
<circle cx="241.7" cy="484.1" r="0.9" fill="#a8a8b8" opacity="0.35"/>
<circle cx="296.3" cy="451.4" r="1.1" fill="#a8a8b8" opacity="0.5"/>
<circle cx="636.6" cy="363.7" r="1.1" fill="#a8a8b8" opacity="0.5"/>
<circle cx="1230.2" cy="485.7" r="0.9" fill="#a8a8b8" opacity="0.35"/>
<circle cx="74.3" cy="859.8" r="0.9" fill="#a8a8b8" opacity="0.35"/>
<circle cx="897.7" cy="590.8" r="0.9" fill="#a8a8b8" opacity="0.35"/>
<circle cx="998.5" cy="100" r="0.9" fill="#a8a8b8" opacity="0.35"/>
<circle cx="589.1" cy="105" r="1.1" fill="#a8a8b8" opacity="0.5"/>
<circle cx="324.7" cy="208.4" r="0.9" fill="#a8a8b8" opacity="0.35"/>
<circle cx="801.1" cy="480.4" r="1.1" fill="#a8a8b8" opacity="0.5"/>
<circle cx="832.5" cy="801.6" r="1.3" fill="#a8a8b8" opacity="0.7"/>
<circle cx="868.3" cy="260.4" r="0.9" fill="#a8a8b8" opacity="0.35"/>
<circle cx="253.3" cy="92.6" r="0.9" fill="#a8a8b8" opacity="0.35"/>
<circle cx="904.4" cy="242.4" r="0.9" fill="#a8a8b8" opacity="0.35"/>
<circle cx="456.4" cy="703.6" r="0.9" fill="#a8a8b8" opacity="0.35"/>
<circle cx="783.2" cy="756" r="0.9" fill="#a8a8b8" opacity="0.35"/>
<circle cx="999" cy="889.6" r="0.9" fill="#a8a8b8" opacity="0.35"/>
<circle cx="1170" cy="725.9" r="0.9" fill="#a8a8b8" opacity="0.35"/>
<circle cx="587.5" cy="639.7" r="1.1" fill="#a8a8b8" opacity="0.5"/>
<circle cx="494.2" cy="589.2" r="1.1" fill="#a8a8b8" opacity="0.5"/>
<circle cx="1004.9" cy="923.4" r="0.9" fill="#a8a8b8" opacity="0.35"/>
<circle cx="828" cy="265.4" r="1.1" fill="#a8a8b8" opacity="0.5"/>
<circle cx="1031.1" cy="654" r="1.1" fill="#a8a8b8" opacity="0.5"/>
<circle cx="295.4" cy="884" r="1.3" fill="#a8a8b8" opacity="0.7"/>
<circle cx="1224.5" cy="560.9" r="1.1" fill="#a8a8b8" opacity="0.5"/>
<circle cx="425.6" cy="892.9" r="1.1" fill="#a8a8b8" opacity="0.5"/>
<circle cx="459.8" cy="156.7" r="0.9" fill="#a8a8b8" opacity="0.35"/>
<circle cx="705.2" cy="766.7" r="0.9" fill="#a8a8b8" opacity="0.35"/>
<circle cx="70.5" cy="803.1" r="0.9" fill="#a8a8b8" opacity="0.35"/>
<circle cx="1008.6" cy="236.9" r="0.9" fill="#a8a8b8" opacity="0.35"/>
<circle cx="994.1" cy="208" r="0.9" fill="#a8a8b8" opacity="0.35"/>
<circle cx="664.1" cy="727" r="1.1" fill="#a8a8b8" opacity="0.5"/>
<circle cx="874.3" cy="924.7" r="0.9" fill="#a8a8b8" opacity="0.35"/>
<circle cx="1190.2" cy="159.6" r="0.9" fill="#a8a8b8" opacity="0.35"/>
<circle cx="676.4" cy="341.3" r="1.1" fill="#a8a8b8" opacity="0.5"/>
<circle cx="812.9" cy="548.3" r="1.1" fill="#a8a8b8" opacity="0.5"/>
<circle cx="716.9" cy="360.4" r="0.9" fill="#a8a8b8" opacity="0.35"/>
<circle cx="1063.8" cy="884.5" r="0.9" fill="#a8a8b8" opacity="0.35"/>
<circle cx="1070.5" cy="944.9" r="0.9" fill="#a8a8b8" opacity="0.35"/>
<circle cx="732.8" cy="261.9" r="0.9" fill="#a8a8b8" opacity="0.35"/>
<circle cx="647.9" cy="621.7" r="0.9" fill="#a8a8b8" opacity="0.35"/>
<circle cx="1214.8" cy="542.3" r="0.9" fill="#a8a8b8" opacity="0.35"/>
<circle cx="1010.1" cy="584" r="0.9" fill="#a8a8b8" opacity="0.35"/>
<circle cx="876.2" cy="141.7" r="0.9" fill="#a8a8b8" opacity="0.35"/>
<circle cx="539.1" cy="934.6" r="1.3" fill="#a8a8b8" opacity="0.7"/>
<circle cx="363.4" cy="504.1" r="0.9" fill="#a8a8b8" opacity="0.35"/>
<circle cx="563.4" cy="809" r="1.1" fill="#a8a8b8" opacity="0.5"/>
<circle cx="615.5" cy="365.3" r="0.9" fill="#a8a8b8" opacity="0.35"/>
<circle cx="787.4" cy="906.5" r="0.9" fill="#a8a8b8" opacity="0.35"/>
<circle cx="983.6" cy="103.3" r="0.9" fill="#a8a8b8" opacity="0.35"/>
<circle cx="312.3" cy="694.5" r="0.9" fill="#a8a8b8" opacity="0.35"/>
<circle cx="468.1" cy="634.6" r="0.9" fill="#a8a8b8" opacity="0.35"/>
<circle cx="924.8" cy="192.3" r="0.9" fill="#a8a8b8" opacity="0.35"/>
<circle cx="340.7" cy="259" r="0.9" fill="#a8a8b8" opacity="0.35"/>
<circle cx="567.1" cy="417.4" r="0.9" fill="#a8a8b8" opacity="0.35"/>
<circle cx="679.7" cy="225.2" r="0.9" fill="#a8a8b8" opacity="0.35"/>
<circle cx="803.7" cy="651.2" r="0.9" fill="#a8a8b8" opacity="0.35"/>
<circle cx="1071.1" cy="627.4" r="1.1" fill="#a8a8b8" opacity="0.5"/>
<circle cx="318.9" cy="742.3" r="1.1" fill="#a8a8b8" opacity="0.5"/>
<circle cx="1133.7" cy="364.1" r="0.9" fill="#a8a8b8" opacity="0.35"/>
<circle cx="1158.1" cy="277.1" r="1.3" fill="#a8a8b8" opacity="0.7"/>
<circle cx="1115.3" cy="202.2" r="0.9" fill="#a8a8b8" opacity="0.35"/>
<circle cx="919.5" cy="314" r="0.9" fill="#a8a8b8" opacity="0.35"/>
<circle cx="1047.9" cy="458.3" r="1.1" fill="#a8a8b8" opacity="0.5"/>
<circle cx="189.2" cy="441.5" r="1.1" fill="#a8a8b8" opacity="0.5"/>
<circle cx="57.6" cy="261.8" r="1.1" fill="#a8a8b8" opacity="0.5"/>
<circle cx="1144.2" cy="944.9" r="0.9" fill="#a8a8b8" opacity="0.35"/>
<circle cx="650.9" cy="757.8" r="0.9" fill="#a8a8b8" opacity="0.35"/>
<circle cx="869.8" cy="251.2" r="0.9" fill="#a8a8b8" opacity="0.35"/>
<circle cx="165.1" cy="116.3" r="0.9" fill="#a8a8b8" opacity="0.35"/>
<circle cx="662" cy="589.2" r="0.9" fill="#a8a8b8" opacity="0.35"/>
<circle cx="260.4" cy="264.5" r="1.1" fill="#a8a8b8" opacity="0.5"/>
<circle cx="1240.2" cy="907.9" r="0.9" fill="#a8a8b8" opacity="0.35"/>
<circle cx="111.3" cy="929.8" r="0.9" fill="#a8a8b8" opacity="0.35"/>
<circle cx="965.9" cy="373.9" r="0.9" fill="#a8a8b8" opacity="0.35"/>
<circle cx="662.6" cy="465.8" r="1.1" fill="#a8a8b8" opacity="0.5"/>
<circle cx="52.1" cy="706.9" r="1.1" fill="#a8a8b8" opacity="0.5"/>
<circle cx="256.4" cy="487" r="1.1" fill="#a8a8b8" opacity="0.5"/>
<circle cx="528.8" cy="256.7" r="0.9" fill="#a8a8b8" opacity="0.35"/>
<circle cx="659.3" cy="96.7" r="1.1" fill="#a8a8b8" opacity="0.5"/>
<circle cx="1010.9" cy="710.2" r="1.1" fill="#a8a8b8" opacity="0.5"/>
<circle cx="801.3" cy="443" r="0.9" fill="#a8a8b8" opacity="0.35"/>
<circle cx="649.2" cy="957.6" r="1.1" fill="#a8a8b8" opacity="0.5"/>
<circle cx="350" cy="894.1" r="1.1" fill="#a8a8b8" opacity="0.5"/>
<circle cx="982" cy="808" r="0.9" fill="#a8a8b8" opacity="0.35"/>
<circle cx="1126.2" cy="866.1" r="1.1" fill="#a8a8b8" opacity="0.5"/>
<circle cx="969" cy="764.1" r="0.9" fill="#a8a8b8" opacity="0.35"/>
<circle cx="914.7" cy="145.8" r="0.9" fill="#a8a8b8" opacity="0.35"/>
<circle cx="606.1" cy="92.4" r="0.9" fill="#a8a8b8" opacity="0.35"/>
<circle cx="812.7" cy="638.4" r="0.9" fill="#a8a8b8" opacity="0.35"/>
<circle cx="1184.7" cy="675.8" r="0.9" fill="#a8a8b8" opacity="0.35"/>
<circle cx="838.3" cy="589.9" r="0.9" fill="#a8a8b8" opacity="0.35"/>
<circle cx="509.7" cy="972.9" r="1.1" fill="#a8a8b8" opacity="0.5"/>
<circle cx="888.7" cy="760.9" r="1.3" fill="#a8a8b8" opacity="0.7"/>
<circle cx="63.7" cy="630.7" r="1.1" fill="#a8a8b8" opacity="0.5"/>
<circle cx="348.1" cy="440.4" r="0.9" fill="#a8a8b8" opacity="0.35"/>
<circle cx="273.7" cy="417.4" r="0.9" fill="#a8a8b8" opacity="0.35"/>
<circle cx="341.1" cy="889" r="0.9" fill="#a8a8b8" opacity="0.35"/>
<circle cx="653.5" cy="943.8" r="0.9" fill="#a8a8b8" opacity="0.35"/>
<circle cx="1246" cy="650.8" r="1.1" fill="#a8a8b8" opacity="0.5"/>
<circle cx="128.7" cy="614.8" r="1.1" fill="#a8a8b8" opacity="0.5"/>
<circle cx="90.9" cy="910.8" r="0.9" fill="#a8a8b8" opacity="0.35"/>
<circle cx="609.7" cy="233.5" r="0.9" fill="#a8a8b8" opacity="0.35"/>
<circle cx="779.2" cy="135.1" r="1.3" fill="#a8a8b8" opacity="0.7"/>
<circle cx="547.6" cy="551.8" r="0.9" fill="#a8a8b8" opacity="0.35"/>
<circle cx="480.5" cy="337.3" r="1.1" fill="#a8a8b8" opacity="0.5"/>
<circle cx="717.7" cy="335.3" r="1.1" fill="#a8a8b8" opacity="0.5"/>
<circle cx="396" cy="95.5" r="0.9" fill="#a8a8b8" opacity="0.35"/>
<circle cx="88" cy="222.4" r="1.1" fill="#a8a8b8" opacity="0.5"/>
<circle cx="510.2" cy="881.8" r="1.1" fill="#a8a8b8" opacity="0.5"/>
<circle cx="97" cy="963" r="1.3" fill="#a8a8b8" opacity="0.7"/>
<circle cx="125.4" cy="888.9" r="0.9" fill="#a8a8b8" opacity="0.35"/>
<circle cx="616.8" cy="949.1" r="0.9" fill="#a8a8b8" opacity="0.35"/>
<circle cx="672.4" cy="917.2" r="1.1" fill="#a8a8b8" opacity="0.5"/>
<circle cx="605.5" cy="954.2" r="1.1" fill="#a8a8b8" opacity="0.5"/>
<circle cx="770" cy="185.4" r="1.1" fill="#a8a8b8" opacity="0.5"/>
<circle cx="590.1" cy="264.3" r="0.9" fill="#a8a8b8" opacity="0.35"/>
<circle cx="678.2" cy="193.7" r="0.9" fill="#a8a8b8" opacity="0.35"/>
<circle cx="848.2" cy="488.4" r="0.9" fill="#a8a8b8" opacity="0.35"/>
<circle cx="744" cy="456.4" r="1.1" fill="#a8a8b8" opacity="0.5"/>
<circle cx="681.4" cy="970.9" r="1.3" fill="#a8a8b8" opacity="0.7"/>
<circle cx="928.9" cy="295.2" r="0.9" fill="#a8a8b8" opacity="0.35"/>
<circle cx="1121.5" cy="781" r="1.1" fill="#a8a8b8" opacity="0.5"/>
<circle cx="472.8" cy="324.6" r="1.1" fill="#a8a8b8" opacity="0.5"/>
<circle cx="722.9" cy="609.6" r="1.1" fill="#a8a8b8" opacity="0.5"/>
<circle cx="952.1" cy="251.9" r="0.9" fill="#a8a8b8" opacity="0.35"/>
<circle cx="1227.3" cy="898" r="1.1" fill="#a8a8b8" opacity="0.5"/>
<circle cx="84" cy="137.1" r="0.9" fill="#a8a8b8" opacity="0.35"/>
<circle cx="553" cy="637.8" r="0.9" fill="#a8a8b8" opacity="0.35"/>
<circle cx="694.6" cy="147.5" r="0.9" fill="#a8a8b8" opacity="0.35"/>
<circle cx="858.4" cy="573.1" r="1.1" fill="#a8a8b8" opacity="0.5"/>
<circle cx="489.8" cy="508.9" r="0.9" fill="#a8a8b8" opacity="0.35"/>
<circle cx="453.9" cy="745.9" r="1.1" fill="#a8a8b8" opacity="0.5"/>
<circle cx="126.4" cy="189.6" r="1.1" fill="#a8a8b8" opacity="0.5"/>
<circle cx="794.5" cy="767.2" r="0.9" fill="#a8a8b8" opacity="0.35"/>
<circle cx="552" cy="312.7" r="1.1" fill="#a8a8b8" opacity="0.5"/>
<circle cx="484.6" cy="664.8" r="1.3" fill="#a8a8b8" opacity="0.7"/>
<circle cx="431.7" cy="571.3" r="1.1" fill="#a8a8b8" opacity="0.5"/>
<circle cx="1155.7" cy="463.6" r="0.9" fill="#a8a8b8" opacity="0.35"/>
<circle cx="154" cy="861.9" r="0.9" fill="#a8a8b8" opacity="0.35"/>
<circle cx="137" cy="585.2" r="0.9" fill="#a8a8b8" opacity="0.35"/>
<circle cx="869.4" cy="349" r="1.1" fill="#a8a8b8" opacity="0.5"/>
<circle cx="128.5" cy="272.8" r="1.1" fill="#a8a8b8" opacity="0.5"/>
<circle cx="135.4" cy="353.4" r="1.1" fill="#a8a8b8" opacity="0.5"/>
<circle cx="879.9" cy="334.8" r="0.9" fill="#a8a8b8" opacity="0.35"/>
<circle cx="471.1" cy="729.1" r="0.9" fill="#a8a8b8" opacity="0.35"/>
<circle cx="178.7" cy="714.3" r="0.9" fill="#a8a8b8" opacity="0.35"/>
<circle cx="1153" cy="919.5" r="1.1" fill="#a8a8b8" opacity="0.5"/>
<circle cx="568.6" cy="797.7" r="0.9" fill="#a8a8b8" opacity="0.35"/>
<circle cx="422.2" cy="438.6" r="1.3" fill="#a8a8b8" opacity="0.7"/>
<circle cx="1124" cy="304" r="0.9" fill="#a8a8b8" opacity="0.35"/>
<circle cx="480.5" cy="406.3" r="0.9" fill="#a8a8b8" opacity="0.35"/>
<circle cx="507.3" cy="256.5" r="0.9" fill="#a8a8b8" opacity="0.35"/>
<circle cx="1005.3" cy="564.1" r="1.1" fill="#a8a8b8" opacity="0.5"/>
<circle cx="720.3" cy="240.2" r="1.1" fill="#a8a8b8" opacity="0.5"/>
<circle cx="1107.2" cy="333.5" r="0.9" fill="#a8a8b8" opacity="0.35"/>
<circle cx="663" cy="567.3" r="0.9" fill="#a8a8b8" opacity="0.35"/>
<circle cx="1211.2" cy="662.6" r="1.1" fill="#a8a8b8" opacity="0.5"/>
<circle cx="113.9" cy="569.7" r="1.1" fill="#a8a8b8" opacity="0.5"/>
<circle cx="138.2" cy="155.7" r="1.1" fill="#a8a8b8" opacity="0.5"/>
<circle cx="1129.3" cy="158.4" r="1.1" fill="#a8a8b8" opacity="0.5"/>
<circle cx="211" cy="746.8" r="1.1" fill="#a8a8b8" opacity="0.5"/>
<circle cx="334.5" cy="279.2" r="1.1" fill="#a8a8b8" opacity="0.5"/>
<circle cx="670.2" cy="763.6" r="0.9" fill="#a8a8b8" opacity="0.35"/>
<circle cx="446.8" cy="944.8" r="1.1" fill="#a8a8b8" opacity="0.5"/>
<circle cx="636.3" cy="561.2" r="1.1" fill="#a8a8b8" opacity="0.5"/>
<circle cx="897.1" cy="897.3" r="0.9" fill="#a8a8b8" opacity="0.35"/>
<circle cx="1040.7" cy="676.4" r="1.1" fill="#a8a8b8" opacity="0.5"/>
<circle cx="1016" cy="825.1" r="1.1" fill="#a8a8b8" opacity="0.5"/>
<circle cx="1200.7" cy="652.8" r="0.9" fill="#a8a8b8" opacity="0.35"/>
<circle cx="899.5" cy="797" r="0.9" fill="#a8a8b8" opacity="0.35"/>
<circle cx="547.3" cy="213.1" r="1.1" fill="#a8a8b8" opacity="0.5"/>
<circle cx="1241.1" cy="417.2" r="0.9" fill="#a8a8b8" opacity="0.35"/>
<circle cx="284.5" cy="461.2" r="0.9" fill="#a8a8b8" opacity="0.35"/>
<circle cx="1215.2" cy="135.7" r="0.9" fill="#a8a8b8" opacity="0.35"/>
<circle cx="175.6" cy="659.7" r="1.1" fill="#a8a8b8" opacity="0.5"/>
<circle cx="254.2" cy="138.5" r="0.9" fill="#a8a8b8" opacity="0.35"/>
<circle cx="746.2" cy="892.3" r="0.9" fill="#a8a8b8" opacity="0.35"/>
<circle cx="168.1" cy="247.2" r="0.9" fill="#a8a8b8" opacity="0.35"/>
<circle cx="322.3" cy="721.3" r="0.9" fill="#a8a8b8" opacity="0.35"/>
<circle cx="308.3" cy="247.6" r="0.9" fill="#a8a8b8" opacity="0.35"/>
<circle cx="245.8" cy="757.2" r="0.9" fill="#a8a8b8" opacity="0.35"/>
<circle cx="702.7" cy="810.2" r="0.9" fill="#a8a8b8" opacity="0.35"/>
<circle cx="352.7" cy="872.8" r="1.1" fill="#a8a8b8" opacity="0.5"/>
<circle cx="452" cy="570.1" r="1.3" fill="#a8a8b8" opacity="0.7"/>
<circle cx="622.9" cy="279.7" r="0.9" fill="#a8a8b8" opacity="0.35"/>
<circle cx="1188.2" cy="796.3" r="0.9" fill="#a8a8b8" opacity="0.35"/>
<circle cx="677.5" cy="542.1" r="0.9" fill="#a8a8b8" opacity="0.35"/>
<circle cx="1240.1" cy="668.2" r="0.9" fill="#a8a8b8" opacity="0.35"/>
<circle cx="49.2" cy="503.7" r="0.9" fill="#a8a8b8" opacity="0.35"/>
<circle cx="1004.9" cy="717.8" r="1.1" fill="#a8a8b8" opacity="0.5"/>
<circle cx="227.3" cy="222.7" r="0.9" fill="#a8a8b8" opacity="0.35"/>
<circle cx="351.5" cy="856.6" r="0.9" fill="#a8a8b8" opacity="0.35"/>
<circle cx="810.6" cy="966.9" r="0.9" fill="#a8a8b8" opacity="0.35"/>
<circle cx="686" cy="217.1" r="1.1" fill="#a8a8b8" opacity="0.5"/>
<circle cx="37.7" cy="814.1" r="1.1" fill="#a8a8b8" opacity="0.5"/>
<circle cx="1035.7" cy="156.4" r="0.9" fill="#a8a8b8" opacity="0.35"/>
<circle cx="907.3" cy="169.5" r="0.9" fill="#a8a8b8" opacity="0.35"/>
<circle cx="605.9" cy="933.4" r="0.9" fill="#a8a8b8" opacity="0.35"/>
<circle cx="1078.5" cy="353.2" r="1.1" fill="#a8a8b8" opacity="0.5"/>
<circle cx="543" cy="898.9" r="0.9" fill="#a8a8b8" opacity="0.35"/>
<circle cx="1040.8" cy="268.5" r="0.9" fill="#a8a8b8" opacity="0.35"/>
<circle cx="675.2" cy="223.2" r="1.1" fill="#a8a8b8" opacity="0.5"/>
<circle cx="414.7" cy="359.6" r="0.9" fill="#a8a8b8" opacity="0.35"/>
<circle cx="407.7" cy="498.8" r="1.1" fill="#a8a8b8" opacity="0.5"/>
<circle cx="473.4" cy="694.5" r="0.9" fill="#a8a8b8" opacity="0.35"/>
<circle cx="515.4" cy="494" r="1.3" fill="#a8a8b8" opacity="0.7"/>
<circle cx="1045" cy="665" r="0.9" fill="#a8a8b8" opacity="0.35"/>
<circle cx="494.6" cy="714.9" r="0.9" fill="#a8a8b8" opacity="0.35"/>
<circle cx="722" cy="490.7" r="0.9" fill="#a8a8b8" opacity="0.35"/>
<circle cx="1241.8" cy="794.5" r="0.9" fill="#a8a8b8" opacity="0.35"/>
<circle cx="785.1" cy="341.5" r="0.9" fill="#a8a8b8" opacity="0.35"/>
<circle cx="692.4" cy="348.4" r="0.9" fill="#a8a8b8" opacity="0.35"/>
<circle cx="512.9" cy="676.4" r="0.9" fill="#a8a8b8" opacity="0.35"/>
<circle cx="279.1" cy="734" r="0.9" fill="#a8a8b8" opacity="0.35"/>
<circle cx="1185.2" cy="583.9" r="1.1" fill="#a8a8b8" opacity="0.5"/>
<circle cx="439.3" cy="818.9" r="0.9" fill="#a8a8b8" opacity="0.35"/>
<circle cx="207.2" cy="167" r="1.1" fill="#a8a8b8" opacity="0.5"/>
<circle cx="897.3" cy="243.1" r="0.9" fill="#a8a8b8" opacity="0.35"/>
<circle cx="1053.7" cy="610.5" r="0.9" fill="#a8a8b8" opacity="0.35"/>
<circle cx="311.5" cy="222.8" r="0.9" fill="#a8a8b8" opacity="0.35"/>
<circle cx="530.7" cy="147.7" r="1.3" fill="#a8a8b8" opacity="0.7"/>
<circle cx="555.2" cy="538.3" r="1.1" fill="#a8a8b8" opacity="0.5"/>
<circle cx="968.5" cy="813.8" r="0.9" fill="#a8a8b8" opacity="0.35"/>
<circle cx="439" cy="449.8" r="0.9" fill="#a8a8b8" opacity="0.35"/>
<circle cx="523.3" cy="705.9" r="1.3" fill="#a8a8b8" opacity="0.7"/>
<circle cx="996.2" cy="670.6" r="1.1" fill="#a8a8b8" opacity="0.5"/>
<circle cx="58.5" cy="377.6" r="0.9" fill="#a8a8b8" opacity="0.35"/>
<circle cx="827.3" cy="177.6" r="0.9" fill="#a8a8b8" opacity="0.35"/>
<circle cx="655.4" cy="784.8" r="1.1" fill="#a8a8b8" opacity="0.5"/>
<circle cx="779.5" cy="223.9" r="1.1" fill="#a8a8b8" opacity="0.5"/>
<circle cx="1134" cy="570.9" r="0.9" fill="#a8a8b8" opacity="0.35"/>
<circle cx="644.5" cy="209.2" r="1.1" fill="#a8a8b8" opacity="0.5"/>
<circle cx="1235.9" cy="542.3" r="1.1" fill="#a8a8b8" opacity="0.5"/>
<circle cx="1052" cy="258.5" r="1.3" fill="#a8a8b8" opacity="0.7"/>
<circle cx="798.6" cy="259.1" r="0.9" fill="#a8a8b8" opacity="0.35"/>
<circle cx="333.4" cy="596.1" r="1.1" fill="#a8a8b8" opacity="0.5"/>
<circle cx="436.3" cy="909.9" r="0.9" fill="#a8a8b8" opacity="0.35"/>
<circle cx="599" cy="193.4" r="1.3" fill="#a8a8b8" opacity="0.7"/>
<circle cx="200.9" cy="887.6" r="0.9" fill="#a8a8b8" opacity="0.35"/>
<circle cx="717.8" cy="581.7" r="0.9" fill="#a8a8b8" opacity="0.35"/>
<circle cx="1141.7" cy="966" r="1.1" fill="#a8a8b8" opacity="0.5"/>
<circle cx="767.4" cy="192.2" r="1.1" fill="#a8a8b8" opacity="0.5"/>
<circle cx="386.9" cy="881.3" r="0.9" fill="#a8a8b8" opacity="0.35"/>
<circle cx="733.5" cy="822.4" r="0.9" fill="#a8a8b8" opacity="0.35"/>
<circle cx="702.2" cy="150.9" r="0.9" fill="#a8a8b8" opacity="0.35"/>
<circle cx="255" cy="961.4" r="1.3" fill="#a8a8b8" opacity="0.7"/>
<circle cx="836.6" cy="356.8" r="1.1" fill="#a8a8b8" opacity="0.5"/>
<circle cx="933" cy="422.7" r="0.9" fill="#a8a8b8" opacity="0.35"/>
<circle cx="1013.4" cy="97.6" r="0.9" fill="#a8a8b8" opacity="0.35"/>
<circle cx="605.1" cy="210.3" r="0.9" fill="#a8a8b8" opacity="0.35"/>
<circle cx="728.5" cy="237.6" r="0.9" fill="#a8a8b8" opacity="0.35"/>
<circle cx="356.6" cy="588.6" r="0.9" fill="#a8a8b8" opacity="0.35"/>
<circle cx="816.3" cy="116.7" r="1.1" fill="#a8a8b8" opacity="0.5"/>
<circle cx="212" cy="936.8" r="1.1" fill="#a8a8b8" opacity="0.5"/>
<circle cx="607.4" cy="449.2" r="1.1" fill="#a8a8b8" opacity="0.5"/>
<circle cx="874.2" cy="757.7" r="1.1" fill="#a8a8b8" opacity="0.5"/>
<circle cx="626.7" cy="968.2" r="1.1" fill="#a8a8b8" opacity="0.5"/>
<circle cx="1075.7" cy="447" r="0.9" fill="#a8a8b8" opacity="0.35"/>
<circle cx="724.2" cy="888.7" r="0.9" fill="#a8a8b8" opacity="0.35"/>
<circle cx="674.4" cy="467.7" r="1.1" fill="#a8a8b8" opacity="0.5"/>
<circle cx="426" cy="131.7" r="1.1" fill="#a8a8b8" opacity="0.5"/>
<circle cx="1130.6" cy="734.5" r="0.9" fill="#a8a8b8" opacity="0.35"/>
<circle cx="950.3" cy="354.2" r="0.9" fill="#a8a8b8" opacity="0.35"/>
<circle cx="120.9" cy="193.8" r="0.9" fill="#a8a8b8" opacity="0.35"/>
<circle cx="647.2" cy="436.1" r="0.9" fill="#a8a8b8" opacity="0.35"/>
<circle cx="881" cy="551.3" r="0.9" fill="#a8a8b8" opacity="0.35"/>
<circle cx="408.5" cy="435" r="0.9" fill="#a8a8b8" opacity="0.35"/>
<circle cx="119.2" cy="894.1" r="1.3" fill="#a8a8b8" opacity="0.7"/>
<circle cx="845.5" cy="854.2" r="0.9" fill="#a8a8b8" opacity="0.35"/>
<circle cx="1015.2" cy="280.4" r="1.1" fill="#a8a8b8" opacity="0.5"/>
<circle cx="725.2" cy="887" r="0.9" fill="#a8a8b8" opacity="0.35"/>
<circle cx="999.5" cy="193.2" r="0.9" fill="#a8a8b8" opacity="0.35"/>
<circle cx="1192.4" cy="83.5" r="0.9" fill="#a8a8b8" opacity="0.35"/>
<circle cx="399.9" cy="372" r="0.9" fill="#a8a8b8" opacity="0.35"/>
<circle cx="1124.5" cy="808.7" r="0.9" fill="#a8a8b8" opacity="0.35"/>
<circle cx="469.5" cy="604.1" r="0.9" fill="#a8a8b8" opacity="0.35"/>
<circle cx="73.9" cy="882.7" r="0.9" fill="#a8a8b8" opacity="0.35"/>
<circle cx="642.1" cy="914.2" r="1.3" fill="#a8a8b8" opacity="0.7"/>
<circle cx="610.7" cy="266.8" r="0.9" fill="#a8a8b8" opacity="0.35"/>
<circle cx="1157.9" cy="881.1" r="0.9" fill="#a8a8b8" opacity="0.35"/>
<circle cx="1054.9" cy="398.2" r="0.9" fill="#a8a8b8" opacity="0.35"/>
<circle cx="245" cy="865.9" r="1.3" fill="#a8a8b8" opacity="0.7"/>
<circle cx="281.6" cy="645.8" r="0.9" fill="#a8a8b8" opacity="0.35"/>
<circle cx="1106.3" cy="127.5" r="0.9" fill="#a8a8b8" opacity="0.35"/>
<circle cx="918.5" cy="361.6" r="1.1" fill="#a8a8b8" opacity="0.5"/>
<circle cx="1093.4" cy="717.7" r="0.9" fill="#a8a8b8" opacity="0.35"/>
<circle cx="882.3" cy="917.6" r="0.9" fill="#a8a8b8" opacity="0.35"/>
<circle cx="132.1" cy="281.7" r="0.9" fill="#a8a8b8" opacity="0.35"/>
<circle cx="900" cy="257.9" r="0.9" fill="#a8a8b8" opacity="0.35"/>
<circle cx="322.3" cy="674.5" r="1.1" fill="#a8a8b8" opacity="0.5"/>
<circle cx="489" cy="672.2" r="1.1" fill="#a8a8b8" opacity="0.5"/>
<circle cx="753.3" cy="286.8" r="0.9" fill="#a8a8b8" opacity="0.35"/>
<circle cx="1162.9" cy="676.7" r="0.9" fill="#a8a8b8" opacity="0.35"/>
<circle cx="814.2" cy="163.1" r="1.3" fill="#a8a8b8" opacity="0.7"/>
<circle cx="571.5" cy="553.2" r="0.9" fill="#a8a8b8" opacity="0.35"/>
<circle cx="91.1" cy="616.7" r="0.9" fill="#a8a8b8" opacity="0.35"/>
<circle cx="341.1" cy="797.9" r="0.9" fill="#a8a8b8" opacity="0.35"/>
<circle cx="382.7" cy="755.6" r="0.9" fill="#a8a8b8" opacity="0.35"/>
<circle cx="375.4" cy="570.8" r="0.9" fill="#a8a8b8" opacity="0.35"/>
<circle cx="1126.8" cy="962.1" r="0.9" fill="#a8a8b8" opacity="0.35"/>
<circle cx="597.3" cy="751" r="0.9" fill="#a8a8b8" opacity="0.35"/>
<circle cx="1166" cy="527.9" r="0.9" fill="#a8a8b8" opacity="0.35"/>
<circle cx="1190" cy="271.8" r="1.4" fill="#b8b8c4" opacity="0.75"/>
<circle cx="1158" cy="117" r="1.4" fill="#b8b8c4" opacity="0.75"/>
<circle cx="1159.8" cy="231.8" r="1.4" fill="#b8b8c4" opacity="0.75"/>
<circle cx="351.3" cy="573.5" r="1.4" fill="#b8b8c4" opacity="0.75"/>
<circle cx="385" cy="699.2" r="1.4" fill="#b8b8c4" opacity="0.75"/>
<circle cx="451.5" cy="641.5" r="1.4" fill="#b8b8c4" opacity="0.75"/>
<circle cx="439.8" cy="670" r="1.4" fill="#b8b8c4" opacity="0.75"/>
<circle cx="510.9" cy="692.7" r="1.4" fill="#b8b8c4" opacity="0.75"/>
<circle cx="1058" cy="796" r="1.4" fill="#b8b8c4" opacity="0.75"/>
<circle cx="870.3" cy="844" r="1.4" fill="#b8b8c4" opacity="0.75"/>
<circle cx="882" cy="916.7" r="1.4" fill="#b8b8c4" opacity="0.75"/>
<circle cx="273.8" cy="773.5" r="1.4" fill="#b8b8c4" opacity="0.75"/>
<circle cx="329" cy="775.8" r="1.4" fill="#b8b8c4" opacity="0.75"/>
<circle cx="1109" cy="488" r="1.4" fill="#b8b8c4" opacity="0.75"/>
<circle cx="975" cy="385" r="1.4" fill="#b8b8c4" opacity="0.75"/>
<circle cx="757" cy="722" r="1.4" fill="#b8b8c4" opacity="0.75"/>
<circle cx="635" cy="560" r="1.4" fill="#b8b8c4" opacity="0.75"/>
<circle cx="118.9" cy="174.7" r="1.5" fill="#d8d8e8" opacity="0.85"/>
<circle cx="71.1" cy="238.5" r="1.5" fill="#d8d8e8" opacity="0.85"/>
<circle cx="63.4" cy="130.9" r="1.5" fill="#d8d8e8" opacity="0.85"/>
<circle cx="353.4" cy="91.7" r="1.5" fill="#d8d8e8" opacity="0.85"/>
<circle cx="423" cy="242.5" r="1.5" fill="#d8d8e8" opacity="0.85"/>
<circle cx="198" cy="287" r="1.5" fill="#d8d8e8" opacity="0.85"/>
<circle cx="277.7" cy="441.6" r="1.5" fill="#d8d8e8" opacity="0.85"/>
<circle cx="383.9" cy="349" r="1.5" fill="#d8d8e8" opacity="0.85"/>
<circle cx="493.4" cy="376.4" r="1.5" fill="#d8d8e8" opacity="0.85"/>
<circle cx="526" cy="318.2" r="1.5" fill="#d8d8e8" opacity="0.85"/>
<circle cx="679.3" cy="389" r="1.5" fill="#d8d8e8" opacity="0.85"/>
<circle cx="728.2" cy="387.4" r="1.5" fill="#d8d8e8" opacity="0.85"/>
<circle cx="533.5" cy="481.2" r="1.5" fill="#d8d8e8" opacity="0.85"/>
<circle cx="421.2" cy="532" r="1.5" fill="#d8d8e8" opacity="0.85"/>
<circle cx="372.3" cy="542.5" r="1.5" fill="#d8d8e8" opacity="0.85"/>
<circle cx="665.3" cy="109.5" r="1.5" fill="#d8d8e8" opacity="0.85"/>
<circle cx="709.5" cy="112.8" r="1.5" fill="#d8d8e8" opacity="0.85"/>
<circle cx="730.5" cy="160" r="1.5" fill="#d8d8e8" opacity="0.85"/>
<circle cx="680.4" cy="235.7" r="1.5" fill="#d8d8e8" opacity="0.85"/>
<circle cx="632" cy="218" r="1.5" fill="#d8d8e8" opacity="0.85"/>
<circle cx="818.9" cy="290.3" r="1.5" fill="#d8d8e8" opacity="0.85"/>
<circle cx="862.2" cy="307.5" r="1.5" fill="#d8d8e8" opacity="0.85"/>
<circle cx="833.8" cy="339.9" r="1.5" fill="#d8d8e8" opacity="0.85"/>
<circle cx="960.4" cy="313.3" r="1.5" fill="#d8d8e8" opacity="0.85"/>
<circle cx="993.8" cy="386.5" r="1.5" fill="#d8d8e8" opacity="0.85"/>
<circle cx="1002.9" cy="429.2" r="1.5" fill="#d8d8e8" opacity="0.85"/>
<circle cx="1125.6" cy="508.2" r="1.5" fill="#d8d8e8" opacity="0.85"/>
<circle cx="131" cy="544.8" r="1.5" fill="#d8d8e8" opacity="0.85"/>
<circle cx="106.7" cy="576.3" r="1.5" fill="#d8d8e8" opacity="0.85"/>
<circle cx="142.2" cy="647.3" r="1.5" fill="#d8d8e8" opacity="0.85"/>
<circle cx="165.4" cy="616.3" r="1.5" fill="#d8d8e8" opacity="0.85"/>
<circle cx="762" cy="593" r="1.5" fill="#d8d8e8" opacity="0.85"/>
<circle cx="762" cy="573.5" r="1.5" fill="#d8d8e8" opacity="0.85"/>
<circle cx="627.3" cy="667.1" r="1.5" fill="#d8d8e8" opacity="0.85"/>
<circle cx="927.3" cy="587.4" r="1.5" fill="#d8d8e8" opacity="0.85"/>
<circle cx="1054.3" cy="595" r="1.5" fill="#d8d8e8" opacity="0.85"/>
<circle cx="1057.2" cy="619.7" r="1.5" fill="#d8d8e8" opacity="0.85"/>
<circle cx="1091.8" cy="751.3" r="1.5" fill="#d8d8e8" opacity="0.85"/>
<circle cx="1214" cy="812.7" r="1.5" fill="#d8d8e8" opacity="0.85"/>
<circle cx="1077" cy="927.3" r="1.5" fill="#d8d8e8" opacity="0.85"/>
<circle cx="999.7" cy="923" r="1.5" fill="#d8d8e8" opacity="0.85"/>
<circle cx="573.1" cy="797.5" r="1.5" fill="#d8d8e8" opacity="0.85"/>
<circle cx="663" cy="876" r="1.5" fill="#d8d8e8" opacity="0.85"/>
<circle cx="751.5" cy="735.8" r="1.5" fill="#d8d8e8" opacity="0.85"/>
<circle cx="699.8" cy="782.8" r="1.5" fill="#d8d8e8" opacity="0.85"/>
<circle cx="710" cy="817.7" r="1.5" fill="#d8d8e8" opacity="0.85"/>
<circle cx="671.8" cy="855" r="1.5" fill="#d8d8e8" opacity="0.85"/>
<circle cx="73.4" cy="798.6" r="1.5" fill="#d8d8e8" opacity="0.85"/>
<circle cx="118.9" cy="843.3" r="1.5" fill="#d8d8e8" opacity="0.85"/>
<circle cx="209.2" cy="853.8" r="1.5" fill="#d8d8e8" opacity="0.85"/>
<circle cx="343.2" cy="888.8" r="1.5" fill="#d8d8e8" opacity="0.85"/>
<circle cx="336.2" cy="921.4" r="1.5" fill="#d8d8e8" opacity="0.85"/>
<circle cx="71.1" cy="238.5" r="2.2" fill="#f0f0f0" opacity="0.6"/>
<circle cx="730.5" cy="160" r="2.2" fill="#f0f0f0" opacity="0.6"/>
<circle cx="1077" cy="927.3" r="2.2" fill="#f0f0f0" opacity="0.6"/>
<circle cx="627.3" cy="667.1" r="2.2" fill="#f0f0f0" opacity="0.6"/>
<circle cx="1091.8" cy="751.3" r="2.2" fill="#f0f0f0" opacity="0.6"/>
<circle cx="141" cy="510.8" r="10" fill="url(#vg)"/>
<text x="268" y="119.3" fill="#6e6e6e" font-size="13">60°</text>
<text x="289" y="139" fill="#6e6e6e" font-size="13">45°</text>
<text x="462" y="173.3" fill="#6e6e6e" font-size="13">75°</text>
<text x="482.2" y="193.3" fill="#6e6e6e" font-size="13">45°</text>
<text x="642" y="188" fill="#6e6e6e" font-size="13">90°</text>
<text x="661.8" y="207.8" fill="#6e6e6e" font-size="13">45°</text>
<text x="819" y="168.2" fill="#6e6e6e" font-size="13">105°</text>
<text x="842.3" y="188" fill="#6e6e6e" font-size="13">45°</text>
<text x="1015.9" y="106.5" fill="#6e6e6e" font-size="13">120°</text>
<text x="1038" y="126.3" fill="#6e6e6e" font-size="13">45°</text>
<text x="207.4" y="385" fill="#6e6e6e" font-size="13">60°</text>
<text x="227.9" y="405.3" fill="#6e6e6e" font-size="13">30°</text>
<text x="434.7" y="427.7" fill="#6e6e6e" font-size="13">75°</text>
<text x="455" y="447.2" fill="#6e6e6e" font-size="13">30°</text>
<text x="643.2" y="439.8" fill="#6e6e6e" font-size="13">90°</text>
<text x="850.5" y="423.5" fill="#6e6e6e" font-size="13">105°</text>
<text x="873.8" y="443.3" fill="#6e6e6e" font-size="13">30°</text>
<text x="1083" y="375.6" fill="#6e6e6e" font-size="13">120°</text>
<text x="1106.6" y="395.9" fill="#6e6e6e" font-size="13">30°</text>
<text x="149" y="645" fill="#6e6e6e" font-size="13">60°</text>
<text x="170" y="666.5" fill="#6e6e6e" font-size="13">15°</text>
<text x="409" y="670.6" fill="#6e6e6e" font-size="13">75°</text>
<text x="430.5" y="690.4" fill="#6e6e6e" font-size="13">15°</text>
<text x="644" y="677" fill="#6e6e6e" font-size="13">90°</text>
<text x="666.4" y="697.4" fill="#6e6e6e" font-size="13">15°</text>
<text x="879.6" y="668.3" fill="#6e6e6e" font-size="13">105°</text>
<text x="902.9" y="688" fill="#6e6e6e" font-size="13">15°</text>
<text x="1151" y="639.4" fill="#6e6e6e" font-size="13">120°</text>
<text x="1174.5" y="659.2" fill="#6e6e6e" font-size="13">15°</text>
<text x="79.3" y="938.8" fill="#6e6e6e" font-size="13">60°</text>
<text x="384" y="940" fill="#6e6e6e" font-size="13">75°</text>
<text x="647.1" y="938.8" fill="#6e6e6e" font-size="13">90°</text>
<text x="913.4" y="939.5" fill="#6e6e6e" font-size="13">105°</text>
<text x="1226.4" y="940.4" fill="#6e6e6e" font-size="13">120°</text>
<text x="90.4" y="958.2" fill="#6e6e6e" font-size="13">60°</text>
<text x="101" y="958.2" fill="#6e6e6e" font-size="13">0°</text>
<text x="406.7" y="958.6" fill="#6e6e6e" font-size="13">0°</text>
<text x="665" y="958.6" fill="#6e6e6e" font-size="13">90°</text>
<text x="940" y="958.9" fill="#6e6e6e" font-size="13">0°</text>
<text x="665" y="110.5" fill="#b4b4b4" font-size="13">50 °</text>
<text x="665" y="290.5" fill="#b4b4b4" font-size="13">40 °</text>
<text x="665" y="453.5" fill="#b4b4b4" font-size="13">30°</text>
<text x="665" y="459.6" fill="#b4b4b4" font-size="13">30°</text>
<text x="665.3" y="612.4" fill="#b4b4b4" font-size="13">20 °</text>
<text x="664.1" y="774.6" fill="#b4b4b4" font-size="13">10 °</text>
<text x="299.4" y="957.5" fill="#b4b4b4" font-size="13" font-style="italic">70</text>
<text x="482.9" y="957.5" fill="#b4b4b4" font-size="13" font-style="italic">80 °</text>
<text x="830.7" y="957.5" fill="#b4b4b4" font-size="13" font-style="italic">100 °</text>
<text x="1020.2" y="957.6" fill="#b4b4b4" font-size="13" font-style="italic">110 °</text>
<text x="1235" y="957.6" fill="#b4b4b4" font-size="13" font-style="italic">120</text>
<text x="654.8" y="958.6" fill="#b4b4b4" font-size="13" font-style="italic">Est</text>
<text x="25" y="152" fill="#ec7c82" font-size="13" font-style="italic">an</text>
<text x="117.7" y="187" fill="#ec7c82" font-size="13" font-style="italic" textLength="56" lengthAdjust="spacingAndGlyphs">Rastaban</text>
<text x="70.4" y="251.3" fill="#ec7c82" font-size="13" font-style="italic" textLength="47.5" lengthAdjust="spacingAndGlyphs">ETAMIN</text>
<text x="710" y="126" fill="#ec7c82" font-size="13" font-style="italic" textLength="53" lengthAdjust="spacingAndGlyphs">Nusakan</text>
<text x="730" y="172.5" fill="#ec7c82" font-size="13" font-style="italic" textLength="62.5" lengthAdjust="spacingAndGlyphs">ALPHEKKA</text>
<text x="678.6" y="401.5" fill="#ec7c82" font-size="13" font-style="italic" textLength="75.5" lengthAdjust="spacingAndGlyphs">Kornephoros</text>
<text x="993.8" y="399.3" fill="#ec7c82" font-size="13" font-style="italic" textLength="71" lengthAdjust="spacingAndGlyphs">UNUKALHAI</text>
<text x="141" y="522.5" fill="#ec7c82" font-size="13" font-style="italic" textLength="33" lengthAdjust="spacingAndGlyphs">VEGA</text>
<text x="533" y="493.4" fill="#ec7c82" font-size="13" font-style="italic" textLength="30.5" lengthAdjust="spacingAndGlyphs">Sarin</text>
<text x="479.4" y="521" fill="#ec7c82" font-size="13" font-style="italic" textLength="49" lengthAdjust="spacingAndGlyphs">Maasym</text>
<text x="18.5" y="596" fill="#ec7c82" font-size="13" font-style="italic">Altfar</text>
<text x="165.4" y="627.7" fill="#ec7c82" font-size="13" font-style="italic" textLength="42" lengthAdjust="spacingAndGlyphs">Sheliak</text>
<text x="142.2" y="659.2" fill="#ec7c82" font-size="13" font-style="italic" textLength="43" lengthAdjust="spacingAndGlyphs">Sulafat</text>
<text x="658" y="602.5" fill="#ec7c82" font-size="13" font-style="italic" textLength="77" lengthAdjust="spacingAndGlyphs">RASALGETHI</text>
<text x="626.5" y="680" fill="#ec7c82" font-size="13" font-style="italic" textLength="82.5" lengthAdjust="spacingAndGlyphs">RASALHAGUE</text>
<text x="926" y="598.5" fill="#ec7c82" font-size="13" font-style="italic" textLength="36.5" lengthAdjust="spacingAndGlyphs">Marfic</text>
<text x="1054.3" y="607" fill="#ec7c82" font-size="13" font-style="italic" textLength="51.5" lengthAdjust="spacingAndGlyphs">Yed Prior</text>
<text x="1057.7" y="631" fill="#ec7c82" font-size="13" font-style="italic" textLength="77.5" lengthAdjust="spacingAndGlyphs">Yed Posterior</text>
<text x="699.8" y="793.5" fill="#ec7c82" font-size="13" font-style="italic" textLength="46" lengthAdjust="spacingAndGlyphs">Cebalrai</text>
<text x="73.4" y="810.3" fill="#ec7c82" font-size="13" font-style="italic" textLength="52.5" lengthAdjust="spacingAndGlyphs">ALBIREO</text>
<text x="119.3" y="854" fill="#ec7c82" font-size="13" font-style="italic" textLength="35" lengthAdjust="spacingAndGlyphs">Anser</text>
<text x="343.2" y="899.5" fill="#ec7c82" font-size="13" font-style="italic" textLength="85.5" lengthAdjust="spacingAndGlyphs">Deneb el Okab</text>
<text x="336.2" y="933.3" fill="#ec7c82" font-size="13" font-style="italic" textLength="85.5" lengthAdjust="spacingAndGlyphs">Deneb el Okab</text>
<text x="1077" y="940" fill="#ec7c82" font-size="13" font-style="italic" textLength="31" lengthAdjust="spacingAndGlyphs">Sabik</text>
<text x="610" y="198.8" fill="#1f5aa6" font-size="30" font-style="italic" font-family="Liberation Serif" textLength="45" lengthAdjust="spacingAndGlyphs">CrB</text>
<text x="454" y="372.3" fill="#1f5aa6" font-size="30" font-style="italic" font-family="Liberation Serif" textLength="45" lengthAdjust="spacingAndGlyphs">Her</text>
<text x="920.8" y="355.7" fill="#1f5aa6" font-size="30" font-style="italic" font-family="Liberation Serif" textLength="38.5" lengthAdjust="spacingAndGlyphs">Ser</text>
<text x="111" y="646" fill="#1f5aa6" font-size="30" font-style="italic" font-family="Liberation Serif" textLength="41" lengthAdjust="spacingAndGlyphs">Lyr</text>
<text x="896.5" y="748.8" fill="#1f5aa6" font-size="30" font-style="italic" font-family="Liberation Serif" textLength="53" lengthAdjust="spacingAndGlyphs">Oph</text>
<text x="44.8" y="104.8" fill="#ffffff" font-size="12" font-weight="bold" style="white-space:pre">22:45:49  07/05/2011    Zoom: 0.9x (71.7°x52.5°)</text>
<text x="44.8" y="946" fill="#ffffff" font-size="12" font-weight="bold">Mode planétarium</text></svg>
<div id="rtb" class="abs"><div class="abs" style="left:0;top:0;width:30px;height:5px;background:#fafaf6;border-bottom:1px solid #c8c5b5"></div>
<svg class="ic" style="left:4px;top:10px" width="23" height="23" viewBox="0 0 23 23"><circle cx="9" cy="10" r="8" fill="#e8e8f0" stroke="#303040" stroke-width="1.2"/><circle cx="9" cy="5.5" r="1.8" fill="#303040"/><circle cx="5" cy="9" r="1.8" fill="#303040"/><circle cx="13" cy="9" r="1.8" fill="#303040"/><circle cx="6.5" cy="14" r="1.8" fill="#303040"/><circle cx="11.5" cy="14" r="1.8" fill="#303040"/><path d="M13 3 L17 6 L17 14 L13 15 Z" fill="#2050c0"/><path d="M14 8 L18 10 L18 16 L14 16 Z" fill="#60c020"/><path d="M12 18 L18 14 L22 20 L16 22 Z" fill="#e05010"/></svg>
<svg class="ic" style="left:8px;top:42px" width="14" height="17" viewBox="0 0 14 17"><path d="M13 1 L13 16 L1 8.5 Z" fill="#30b030" stroke="#208020" stroke-width="0.8"/></svg>
<svg class="ic" style="left:8px;top:71px" width="14" height="15" viewBox="0 0 14 15"><rect x="0.5" y="0.5" width="13" height="13.5" fill="#30b030" stroke="#208020" stroke-width="0.8"/></svg>
<svg class="ic" style="left:8px;top:98px" width="14" height="17" viewBox="0 0 14 17"><path d="M1 1 L1 16 L13 8.5 Z" fill="#30b030" stroke="#208020" stroke-width="0.8"/></svg>
<div class="hsep" style="left:3px;width:25px;top:122px"></div>
<svg class="ic" style="left:5px;top:130px" width="19" height="18" viewBox="0 0 19 18"><path d="M1 1 L9 8 L11 7 L16 11 L17 15 L13 17 L8 13 L8 10 Z" fill="#fff" stroke="#000" stroke-width="1.3"/><path d="M1 1 L7 7" stroke="#000" stroke-width="2.2"/></svg>
<div class="hsep" style="left:3px;width:25px;top:155.5px"></div>
<svg class="ic" style="left:8px;top:163px" width="12" height="22" viewBox="0 0 12 22"><defs><linearGradient id="cyl" x1="0" y1="0" x2="1" y2="0"><stop offset="0" stop-color="#303030"/><stop offset="0.3" stop-color="#a0a0a0"/><stop offset="0.5" stop-color="#404040"/><stop offset="1" stop-color="#202020"/></linearGradient></defs><rect x="1" y="1" width="10" height="20" rx="1.5" fill="url(#cyl)"/><rect x="1" y="10" width="10" height="11" fill="#303030" opacity="0.8"/></svg>
<div class="hsep" style="left:3px;width:25px;top:189.5px"></div>
<svg class="ic" style="left:4px;top:196px" width="21" height="22" viewBox="0 0 21 22"><rect x="10" y="3" width="9" height="14" fill="#a8b8e8" stroke="#5060a0" stroke-width="0.8"/><rect x="2" y="2" width="12" height="11" fill="#30a0f0" stroke="#3050a0" stroke-width="0.8"/><rect x="3.5" y="3.5" width="9" height="8" fill="#60d0ff"/><path d="M1 16 L14 16 L12 20 L2 20 Z" fill="#e0e8f8" stroke="#6070b0" stroke-width="0.8"/></svg>
<svg class="ic" style="left:6px;top:225px" width="21" height="21" viewBox="0 0 21 21"><rect x="2" y="2" width="13" height="17" fill="#2050c0"/><rect x="4" y="5" width="9" height="12" fill="#f0f4ff"/><path d="M5 11 L7.5 14 L12 7" stroke="#e0b020" stroke-width="1.5" fill="none"/><path d="M10 15 L19 10" stroke="#3060c0" stroke-width="1.5"/><circle cx="19" cy="10" r="1.5" fill="#e02020"/></svg>
<div class="hsep" style="left:3px;width:25px;top:252px"></div>
<svg class="ic" style="left:4px;top:259px" width="19" height="21" viewBox="0 0 19 21"><path d="M3 1 L13 1 L17 5 L17 20 L3 20 Z" fill="#d8e4fc" stroke="#8090c0" stroke-width="0.8"/><circle cx="10" cy="10" r="4.5" fill="#c8f0ff" stroke="#6090c0" stroke-width="1"/><path d="M6.5 13.5 L2 18" stroke="#d08040" stroke-width="2.4" stroke-linecap="round"/></svg>
<div class="hsep" style="left:3px;width:25px;top:286px"></div>
<svg class="ic" style="left:4px;top:294px" width="22" height="19" viewBox="0 0 22 19"><path d="M2 5 L16 3 L21 5 L21 14 L6 17 L2 15 Z" fill="#c8c8c8" stroke="#606060" stroke-width="0.8"/><rect x="2" y="5" width="4" height="11" fill="#e0e0e0"/><circle cx="14" cy="10" r="4.5" fill="#505860" stroke="#303030" stroke-width="1"/><circle cx="14" cy="10" r="2" fill="#202830"/></svg>
<div class="hsep" style="left:3px;width:25px;top:320px"></div>
<svg class="ic" style="left:5px;top:328px" width="18" height="20" viewBox="0 0 18 20"><path d="M5 8 L13 2 L17 6 L9 12 Z" fill="#303030"/><path d="M7 11 L7 16" stroke="#303030" stroke-width="2.5"/><path d="M2 18 L13 18" stroke="#303030" stroke-width="2.2"/><rect x="5" y="10" width="5" height="3" fill="#505050"/></svg>
<div class="hsep" style="left:3px;width:25px;top:354px"></div>
<svg class="ic" style="left:4px;top:361px" width="22" height="21" viewBox="0 0 22 21"><rect width="22" height="21" fill="#000"/><defs><radialGradient id="jup" cx="0.4" cy="0.4" r="0.6"><stop offset="0" stop-color="#ffe0c0"/><stop offset="0.7" stop-color="#e09060"/><stop offset="1" stop-color="#905030"/></radialGradient></defs><circle cx="12" cy="9.5" r="7" fill="url(#jup)"/><path d="M6 8 L18 8 M5.5 11 L18.5 11" stroke="#b07050" stroke-width="0.8"/><circle cx="6" cy="17" r="1.6" fill="#f0d0b0"/></svg>
<div class="hsep" style="left:3px;width:25px;top:388px"></div>
<div class="abs" style="left:5px;top:394px;font-size:20px;line-height:22px;font-weight:bold;color:#1010c8">A</div>
<svg class="ic" style="left:4px;top:423px" width="22" height="22" viewBox="0 0 22 22"><path d="M11 1 L13 4 L16.5 2.5 L17 6 L20.5 7 L19 10.5 L21 13 L17.5 15 L18 18.5 L14.5 18.5 L13 21.5 L10 19.5 L7 21.5 L5.5 18.5 L2 18.5 L2.5 15 L0.5 13 L2.5 10.5 L1.5 7 L5 6 L5.5 2.5 L9 4 Z" fill="#8890e8" stroke="#6068c0" stroke-width="0.6"/><circle cx="11" cy="11" r="5" fill="#ece9d8"/><circle cx="11" cy="11" r="5" fill="none" stroke="#6068c0" stroke-width="0.6"/></svg>
<div class="hsep" style="left:0px;width:30px;top:461px"></div></div>
<div id="status" class="abs"><div class="abs" style="left:0;top:0;width:1280px;height:1px;background:#c8c5b5"></div>
  <span style="left:2px">Pour l'aide, appuyez sur F1</span>
  <span style="left:1068px;word-spacing:-0.3px;letter-spacing:0">16 h&nbsp; 10 m&nbsp; 23.5 s</span>
  <div class="sep" style="left:1170px;top:2px;height:16px"></div>
  <span style="left:1176px;word-spacing:0.2px;letter-spacing:0">- 2 °&nbsp; 45 '&nbsp; 16.5 "</span>
</div>
<div id="bot" class="abs"></div>
</body></html>
